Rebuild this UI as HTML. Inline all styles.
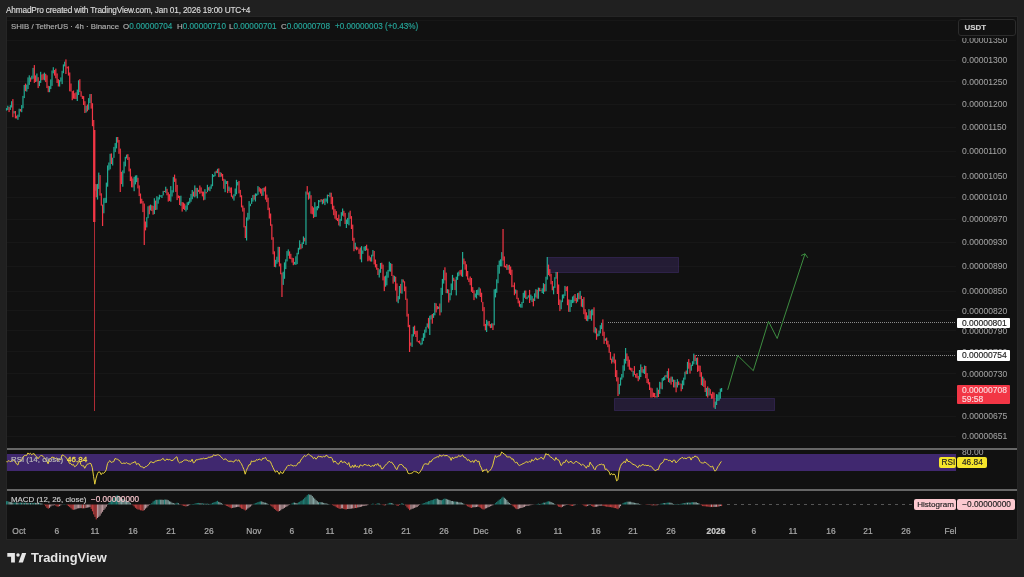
<!DOCTYPE html>
<html><head><meta charset="utf-8"><style>
*{margin:0;padding:0;box-sizing:border-box}
html,body{width:1024px;height:577px;overflow:hidden;background:#202020;font-family:"Liberation Sans",sans-serif}
div{-webkit-text-stroke:0.15px currentColor;will-change:transform}
#top{position:absolute;left:5.8px;top:5.5px;font-size:8.25px;letter-spacing:-0.165px;line-height:10px;color:#dcdcdc;white-space:nowrap}
#panel{position:absolute;left:7px;top:17px;width:1010px;height:522px;background:#111111;overflow:hidden;box-shadow:0 0 0 1px #252525}
svg{position:absolute;left:0;top:0}
.pl{position:absolute;left:961.6px;width:60px;font-size:8.55px;line-height:10px;color:#a2a2a2;white-space:nowrap;-webkit-text-stroke:0.05px currentColor}
#times{position:absolute;left:0;top:0;width:956.3px;height:577px;overflow:hidden}
.tl{position:absolute;top:526.1px;width:40px;text-align:center;font-size:8.4px;letter-spacing:0.15px;line-height:10px;color:#a8a8a8;-webkit-text-stroke:0.22px currentColor}
.tl.b{font-weight:bold;color:#c8c8c8}
.lg{position:absolute;font-size:7.9px;line-height:10px;white-space:nowrap}
.tag{position:absolute;font-size:8.3px;line-height:10px;white-space:nowrap;border-radius:1px}
</style></head><body>
<div id="top">AhmadPro created with TradingView.com, Jan 01, 2026 19:00 UTC+4</div>
<div id="panel"></div>
<svg width="1024" height="577" viewBox="0 0 1024 577">
<line x1="7" y1="20.5" x2="956" y2="20.5" stroke="#171717" stroke-width="1"/><line x1="7" y1="40.5" x2="956" y2="40.5" stroke="#171717" stroke-width="1"/><line x1="7" y1="60.5" x2="956" y2="60.5" stroke="#171717" stroke-width="1"/><line x1="7" y1="81.5" x2="956" y2="81.5" stroke="#171717" stroke-width="1"/><line x1="7" y1="104.5" x2="956" y2="104.5" stroke="#171717" stroke-width="1"/><line x1="7" y1="127.5" x2="956" y2="127.5" stroke="#171717" stroke-width="1"/><line x1="7" y1="151.5" x2="956" y2="151.5" stroke="#171717" stroke-width="1"/><line x1="7" y1="176.5" x2="956" y2="176.5" stroke="#171717" stroke-width="1"/><line x1="7" y1="197.5" x2="956" y2="197.5" stroke="#171717" stroke-width="1"/><line x1="7" y1="219.5" x2="956" y2="219.5" stroke="#171717" stroke-width="1"/><line x1="7" y1="242.5" x2="956" y2="242.5" stroke="#171717" stroke-width="1"/><line x1="7" y1="266.5" x2="956" y2="266.5" stroke="#171717" stroke-width="1"/><line x1="7" y1="291.5" x2="956" y2="291.5" stroke="#171717" stroke-width="1"/><line x1="7" y1="310.5" x2="956" y2="310.5" stroke="#171717" stroke-width="1"/><line x1="7" y1="330.5" x2="956" y2="330.5" stroke="#171717" stroke-width="1"/><line x1="7" y1="351.5" x2="956" y2="351.5" stroke="#171717" stroke-width="1"/><line x1="7" y1="373.5" x2="956" y2="373.5" stroke="#171717" stroke-width="1"/><line x1="7" y1="396.5" x2="956" y2="396.5" stroke="#171717" stroke-width="1"/><line x1="7" y1="416.5" x2="956" y2="416.5" stroke="#171717" stroke-width="1"/><line x1="7" y1="436.5" x2="956" y2="436.5" stroke="#171717" stroke-width="1"/>
<rect x="547.5" y="257.5" width="131" height="15" fill="rgba(105,70,180,0.22)" stroke="rgba(120,80,210,0.45)" stroke-width="1" stroke-dasharray="1 1"/>
<rect x="614.5" y="398.5" width="160" height="12" fill="rgba(105,70,180,0.22)" stroke="rgba(120,80,210,0.45)" stroke-width="1" stroke-dasharray="1 1"/>
<line x1="608" y1="322.5" x2="956" y2="322.5" stroke="#8a8a8a" stroke-width="1" stroke-dasharray="1 1"/>
<line x1="696" y1="355.5" x2="956" y2="355.5" stroke="#8a8a8a" stroke-width="1" stroke-dasharray="1 1"/>
<rect x="94" y="220" width="1" height="191" fill="#f23645" fill-opacity="0.7"/><rect x="5.95" y="108.1" width="1.2" height="2.5" fill="#22ab94"/><rect x="7.22" y="105.7" width="1.2" height="4.3" fill="#22ab94"/><rect x="8.48" y="107.0" width="1.2" height="5.1" fill="#f23645"/><rect x="9.74" y="105.2" width="1.2" height="4.7" fill="#22ab94"/><rect x="11.01" y="101.2" width="1.2" height="6.3" fill="#22ab94"/><rect x="12.27" y="99.1" width="1.2" height="18.1" fill="#f23645"/><rect x="13.53" y="111.1" width="1.2" height="2.3" fill="#22ab94"/><rect x="14.80" y="111.0" width="1.2" height="7.4" fill="#f23645"/><rect x="16.06" y="115.7" width="1.2" height="2.8" fill="#f23645"/><rect x="17.32" y="114.6" width="1.2" height="5.2" fill="#22ab94"/><rect x="18.59" y="108.7" width="1.2" height="8.2" fill="#22ab94"/><rect x="19.85" y="109.0" width="1.2" height="2.5" fill="#f23645"/><rect x="21.11" y="105.1" width="1.2" height="7.1" fill="#22ab94"/><rect x="22.38" y="95.9" width="1.2" height="12.3" fill="#22ab94"/><rect x="23.64" y="85.0" width="1.2" height="13.1" fill="#22ab94"/><rect x="24.90" y="83.6" width="1.2" height="7.6" fill="#f23645"/><rect x="26.17" y="84.7" width="1.2" height="6.9" fill="#22ab94"/><rect x="27.43" y="77.4" width="1.2" height="11.6" fill="#22ab94"/><rect x="28.69" y="75.3" width="1.2" height="9.6" fill="#22ab94"/><rect x="29.96" y="77.5" width="1.2" height="4.3" fill="#f23645"/><rect x="31.22" y="75.7" width="1.2" height="3.8" fill="#22ab94"/><rect x="32.48" y="67.9" width="1.2" height="10.8" fill="#22ab94"/><rect x="33.75" y="65.1" width="1.2" height="17.8" fill="#f23645"/><rect x="35.01" y="75.4" width="1.2" height="6.6" fill="#f23645"/><rect x="36.27" y="73.5" width="1.2" height="8.0" fill="#22ab94"/><rect x="37.54" y="77.2" width="1.2" height="10.9" fill="#f23645"/><rect x="38.80" y="80.9" width="1.2" height="5.2" fill="#22ab94"/><rect x="40.06" y="71.8" width="1.2" height="11.1" fill="#22ab94"/><rect x="41.33" y="74.5" width="1.2" height="5.7" fill="#f23645"/><rect x="42.59" y="73.7" width="1.2" height="6.0" fill="#f23645"/><rect x="43.85" y="72.6" width="1.2" height="7.8" fill="#22ab94"/><rect x="45.12" y="73.8" width="1.2" height="8.3" fill="#f23645"/><rect x="46.38" y="75.3" width="1.2" height="12.8" fill="#f23645"/><rect x="47.64" y="85.8" width="1.2" height="6.4" fill="#f23645"/><rect x="48.91" y="86.1" width="1.2" height="6.1" fill="#22ab94"/><rect x="50.17" y="79.4" width="1.2" height="9.7" fill="#22ab94"/><rect x="51.43" y="70.5" width="1.2" height="15.4" fill="#22ab94"/><rect x="52.70" y="67.2" width="1.2" height="6.1" fill="#22ab94"/><rect x="53.96" y="70.0" width="1.2" height="5.6" fill="#f23645"/><rect x="55.22" y="68.6" width="1.2" height="9.7" fill="#f23645"/><rect x="56.49" y="73.4" width="1.2" height="9.6" fill="#f23645"/><rect x="57.75" y="79.2" width="1.2" height="7.3" fill="#f23645"/><rect x="59.01" y="80.1" width="1.2" height="6.5" fill="#22ab94"/><rect x="60.28" y="77.4" width="1.2" height="4.2" fill="#22ab94"/><rect x="61.54" y="70.8" width="1.2" height="13.3" fill="#22ab94"/><rect x="62.80" y="64.4" width="1.2" height="8.8" fill="#22ab94"/><rect x="64.07" y="61.7" width="1.2" height="4.7" fill="#22ab94"/><rect x="65.33" y="59.4" width="1.2" height="14.6" fill="#f23645"/><rect x="66.59" y="66.7" width="1.2" height="1.7" fill="#f23645"/><rect x="67.86" y="66.3" width="1.2" height="9.3" fill="#f23645"/><rect x="69.12" y="72.5" width="1.2" height="18.8" fill="#f23645"/><rect x="70.38" y="83.5" width="1.2" height="8.0" fill="#f23645"/><rect x="71.65" y="91.1" width="1.2" height="9.1" fill="#f23645"/><rect x="72.91" y="90.5" width="1.2" height="8.2" fill="#f23645"/><rect x="74.17" y="93.2" width="1.2" height="5.7" fill="#f23645"/><rect x="75.44" y="92.3" width="1.2" height="6.8" fill="#f23645"/><rect x="76.70" y="89.6" width="1.2" height="11.4" fill="#22ab94"/><rect x="77.96" y="80.3" width="1.2" height="14.7" fill="#22ab94"/><rect x="79.23" y="79.2" width="1.2" height="12.9" fill="#f23645"/><rect x="80.49" y="91.3" width="1.2" height="5.4" fill="#f23645"/><rect x="81.75" y="95.8" width="1.2" height="3.2" fill="#f23645"/><rect x="83.02" y="96.1" width="1.2" height="8.9" fill="#f23645"/><rect x="84.28" y="101.2" width="1.2" height="11.8" fill="#f23645"/><rect x="85.54" y="105.8" width="1.2" height="6.7" fill="#22ab94"/><rect x="86.81" y="104.5" width="1.2" height="6.8" fill="#f23645"/><rect x="88.07" y="98.1" width="1.2" height="11.7" fill="#22ab94"/><rect x="89.33" y="94.1" width="1.2" height="8.9" fill="#22ab94"/><rect x="90.60" y="94.0" width="1.2" height="14.6" fill="#f23645"/><rect x="91.86" y="103.2" width="1.2" height="23.0" fill="#f23645"/><rect x="93.12" y="120.0" width="1.2" height="102.0" fill="#f23645"/><rect x="94.39" y="184.0" width="1.2" height="6.7" fill="#22ab94"/><rect x="95.65" y="184.2" width="1.2" height="13.1" fill="#f23645"/><rect x="96.91" y="183.9" width="1.2" height="15.7" fill="#22ab94"/><rect x="98.18" y="172.6" width="1.2" height="16.3" fill="#22ab94"/><rect x="99.44" y="175.1" width="1.2" height="20.5" fill="#f23645"/><rect x="100.70" y="193.3" width="1.2" height="12.3" fill="#f23645"/><rect x="101.97" y="204.6" width="1.2" height="21.4" fill="#f23645"/><rect x="103.23" y="198.2" width="1.2" height="15.1" fill="#22ab94"/><rect x="104.49" y="197.8" width="1.2" height="5.3" fill="#22ab94"/><rect x="105.76" y="182.6" width="1.2" height="20.2" fill="#22ab94"/><rect x="107.02" y="165.4" width="1.2" height="21.3" fill="#22ab94"/><rect x="108.28" y="162.5" width="1.2" height="7.9" fill="#22ab94"/><rect x="109.55" y="153.8" width="1.2" height="15.5" fill="#22ab94"/><rect x="110.81" y="153.4" width="1.2" height="10.6" fill="#f23645"/><rect x="112.07" y="157.7" width="1.2" height="7.8" fill="#22ab94"/><rect x="113.34" y="146.9" width="1.2" height="11.0" fill="#22ab94"/><rect x="114.60" y="143.1" width="1.2" height="9.0" fill="#22ab94"/><rect x="115.86" y="137.1" width="1.2" height="11.3" fill="#22ab94"/><rect x="117.13" y="137.0" width="1.2" height="5.6" fill="#f23645"/><rect x="118.39" y="140.0" width="1.2" height="13.8" fill="#f23645"/><rect x="119.65" y="148.6" width="1.2" height="43.4" fill="#f23645"/><rect x="120.92" y="171.8" width="1.2" height="12.3" fill="#f23645"/><rect x="122.18" y="170.4" width="1.2" height="16.3" fill="#22ab94"/><rect x="123.44" y="161.6" width="1.2" height="11.7" fill="#22ab94"/><rect x="124.71" y="156.8" width="1.2" height="9.6" fill="#22ab94"/><rect x="125.97" y="154.6" width="1.2" height="3.8" fill="#22ab94"/><rect x="127.23" y="154.2" width="1.2" height="5.8" fill="#f23645"/><rect x="128.50" y="157.2" width="1.2" height="14.2" fill="#f23645"/><rect x="129.76" y="168.6" width="1.2" height="12.5" fill="#f23645"/><rect x="131.02" y="176.5" width="1.2" height="10.8" fill="#f23645"/><rect x="132.29" y="178.5" width="1.2" height="8.9" fill="#f23645"/><rect x="133.55" y="176.9" width="1.2" height="14.3" fill="#22ab94"/><rect x="134.81" y="175.5" width="1.2" height="8.9" fill="#22ab94"/><rect x="136.08" y="175.2" width="1.2" height="6.9" fill="#22ab94"/><rect x="137.34" y="177.7" width="1.2" height="10.7" fill="#f23645"/><rect x="138.60" y="185.4" width="1.2" height="10.7" fill="#f23645"/><rect x="139.87" y="193.5" width="1.2" height="10.2" fill="#f23645"/><rect x="141.13" y="198.7" width="1.2" height="4.8" fill="#f23645"/><rect x="142.39" y="201.1" width="1.2" height="11.0" fill="#f23645"/><rect x="143.66" y="203.5" width="1.2" height="41.5" fill="#f23645"/><rect x="144.92" y="221.5" width="1.2" height="8.9" fill="#f23645"/><rect x="146.18" y="217.2" width="1.2" height="10.2" fill="#22ab94"/><rect x="147.45" y="206.3" width="1.2" height="11.9" fill="#22ab94"/><rect x="148.71" y="205.5" width="1.2" height="8.8" fill="#f23645"/><rect x="149.97" y="204.6" width="1.2" height="5.8" fill="#22ab94"/><rect x="151.24" y="205.3" width="1.2" height="5.8" fill="#f23645"/><rect x="152.50" y="205.9" width="1.2" height="8.8" fill="#f23645"/><rect x="153.76" y="198.2" width="1.2" height="15.9" fill="#22ab94"/><rect x="155.03" y="200.6" width="1.2" height="9.4" fill="#f23645"/><rect x="156.29" y="196.2" width="1.2" height="13.5" fill="#22ab94"/><rect x="157.55" y="197.2" width="1.2" height="6.5" fill="#22ab94"/><rect x="158.82" y="194.7" width="1.2" height="4.8" fill="#22ab94"/><rect x="160.08" y="195.3" width="1.2" height="1.4" fill="#22ab94"/><rect x="161.34" y="195.0" width="1.2" height="3.0" fill="#22ab94"/><rect x="162.61" y="190.9" width="1.2" height="4.5" fill="#22ab94"/><rect x="163.87" y="190.9" width="1.2" height="1.1" fill="#f23645"/><rect x="165.13" y="186.7" width="1.2" height="6.1" fill="#22ab94"/><rect x="166.40" y="188.8" width="1.2" height="6.5" fill="#f23645"/><rect x="167.66" y="192.3" width="1.2" height="9.3" fill="#f23645"/><rect x="168.92" y="194.2" width="1.2" height="6.7" fill="#f23645"/><rect x="170.19" y="186.1" width="1.2" height="15.6" fill="#22ab94"/><rect x="171.45" y="190.2" width="1.2" height="6.3" fill="#22ab94"/><rect x="172.71" y="177.1" width="1.2" height="15.4" fill="#22ab94"/><rect x="173.98" y="174.6" width="1.2" height="7.3" fill="#f23645"/><rect x="175.24" y="178.5" width="1.2" height="13.4" fill="#f23645"/><rect x="176.50" y="184.9" width="1.2" height="15.2" fill="#f23645"/><rect x="177.77" y="195.4" width="1.2" height="2.7" fill="#f23645"/><rect x="179.03" y="195.9" width="1.2" height="9.1" fill="#f23645"/><rect x="180.29" y="195.7" width="1.2" height="10.1" fill="#22ab94"/><rect x="181.56" y="202.1" width="1.2" height="9.5" fill="#f23645"/><rect x="182.82" y="202.5" width="1.2" height="6.6" fill="#f23645"/><rect x="184.08" y="203.6" width="1.2" height="6.4" fill="#f23645"/><rect x="185.35" y="205.5" width="1.2" height="6.0" fill="#22ab94"/><rect x="186.61" y="202.3" width="1.2" height="7.5" fill="#22ab94"/><rect x="187.87" y="201.6" width="1.2" height="3.5" fill="#22ab94"/><rect x="189.14" y="197.9" width="1.2" height="5.5" fill="#22ab94"/><rect x="190.40" y="193.9" width="1.2" height="7.9" fill="#22ab94"/><rect x="191.66" y="190.0" width="1.2" height="9.2" fill="#22ab94"/><rect x="192.93" y="191.6" width="1.2" height="4.9" fill="#f23645"/><rect x="194.19" y="185.4" width="1.2" height="11.9" fill="#22ab94"/><rect x="195.45" y="187.8" width="1.2" height="8.5" fill="#f23645"/><rect x="196.72" y="187.9" width="1.2" height="10.4" fill="#22ab94"/><rect x="197.98" y="189.8" width="1.2" height="2.1" fill="#f23645"/><rect x="199.24" y="185.5" width="1.2" height="8.3" fill="#f23645"/><rect x="200.51" y="187.4" width="1.2" height="5.8" fill="#f23645"/><rect x="201.77" y="191.5" width="1.2" height="4.9" fill="#f23645"/><rect x="203.03" y="191.6" width="1.2" height="8.7" fill="#f23645"/><rect x="204.30" y="189.2" width="1.2" height="10.5" fill="#22ab94"/><rect x="205.56" y="191.9" width="1.2" height="1.5" fill="#f23645"/><rect x="206.82" y="184.8" width="1.2" height="7.3" fill="#22ab94"/><rect x="208.09" y="187.2" width="1.2" height="3.3" fill="#f23645"/><rect x="209.35" y="186.5" width="1.2" height="4.7" fill="#22ab94"/><rect x="210.61" y="184.4" width="1.2" height="4.4" fill="#22ab94"/><rect x="211.88" y="174.0" width="1.2" height="12.2" fill="#22ab94"/><rect x="213.14" y="175.0" width="1.2" height="2.0" fill="#22ab94"/><rect x="214.40" y="171.6" width="1.2" height="4.6" fill="#22ab94"/><rect x="215.67" y="170.7" width="1.2" height="2.4" fill="#f23645"/><rect x="216.93" y="168.8" width="1.2" height="4.3" fill="#22ab94"/><rect x="218.19" y="168.4" width="1.2" height="8.7" fill="#f23645"/><rect x="219.46" y="172.1" width="1.2" height="5.0" fill="#22ab94"/><rect x="220.72" y="172.8" width="1.2" height="3.8" fill="#f23645"/><rect x="221.98" y="174.0" width="1.2" height="6.8" fill="#f23645"/><rect x="223.25" y="178.8" width="1.2" height="10.0" fill="#f23645"/><rect x="224.51" y="179.5" width="1.2" height="12.7" fill="#22ab94"/><rect x="225.77" y="181.1" width="1.2" height="2.9" fill="#22ab94"/><rect x="227.04" y="180.9" width="1.2" height="12.2" fill="#f23645"/><rect x="228.30" y="186.5" width="1.2" height="4.6" fill="#22ab94"/><rect x="229.56" y="187.6" width="1.2" height="5.3" fill="#f23645"/><rect x="230.83" y="187.4" width="1.2" height="9.4" fill="#f23645"/><rect x="232.09" y="195.6" width="1.2" height="3.0" fill="#f23645"/><rect x="233.35" y="194.2" width="1.2" height="6.4" fill="#22ab94"/><rect x="234.62" y="188.5" width="1.2" height="7.7" fill="#22ab94"/><rect x="235.88" y="179.8" width="1.2" height="14.5" fill="#22ab94"/><rect x="237.14" y="182.0" width="1.2" height="3.4" fill="#22ab94"/><rect x="238.41" y="180.9" width="1.2" height="12.5" fill="#f23645"/><rect x="239.67" y="189.9" width="1.2" height="7.3" fill="#f23645"/><rect x="240.93" y="195.3" width="1.2" height="12.1" fill="#f23645"/><rect x="242.20" y="205.5" width="1.2" height="6.1" fill="#f23645"/><rect x="243.46" y="207.8" width="1.2" height="19.6" fill="#f23645"/><rect x="244.72" y="226.1" width="1.2" height="11.9" fill="#f23645"/><rect x="245.99" y="217.4" width="1.2" height="23.1" fill="#22ab94"/><rect x="247.25" y="212.8" width="1.2" height="7.8" fill="#22ab94"/><rect x="248.51" y="201.1" width="1.2" height="18.3" fill="#22ab94"/><rect x="249.78" y="203.7" width="1.2" height="2.5" fill="#22ab94"/><rect x="251.04" y="198.0" width="1.2" height="5.9" fill="#22ab94"/><rect x="252.30" y="195.1" width="1.2" height="6.5" fill="#22ab94"/><rect x="253.57" y="194.7" width="1.2" height="5.0" fill="#f23645"/><rect x="254.83" y="193.4" width="1.2" height="8.1" fill="#22ab94"/><rect x="256.09" y="193.6" width="1.2" height="2.3" fill="#22ab94"/><rect x="257.36" y="186.1" width="1.2" height="8.7" fill="#22ab94"/><rect x="258.62" y="187.2" width="1.2" height="4.5" fill="#f23645"/><rect x="259.88" y="188.3" width="1.2" height="5.3" fill="#f23645"/><rect x="261.15" y="188.8" width="1.2" height="7.2" fill="#f23645"/><rect x="262.41" y="188.0" width="1.2" height="7.7" fill="#22ab94"/><rect x="263.67" y="187.5" width="1.2" height="4.0" fill="#f23645"/><rect x="264.94" y="186.4" width="1.2" height="13.2" fill="#f23645"/><rect x="266.20" y="194.6" width="1.2" height="7.5" fill="#f23645"/><rect x="267.46" y="197.7" width="1.2" height="12.4" fill="#f23645"/><rect x="268.73" y="207.7" width="1.2" height="10.8" fill="#f23645"/><rect x="269.99" y="213.5" width="1.2" height="12.3" fill="#f23645"/><rect x="271.25" y="224.3" width="1.2" height="15.5" fill="#f23645"/><rect x="272.52" y="237.2" width="1.2" height="17.1" fill="#f23645"/><rect x="273.78" y="251.3" width="1.2" height="15.6" fill="#f23645"/><rect x="275.04" y="259.8" width="1.2" height="7.5" fill="#22ab94"/><rect x="276.31" y="256.7" width="1.2" height="7.1" fill="#22ab94"/><rect x="277.57" y="246.8" width="1.2" height="15.4" fill="#22ab94"/><rect x="278.83" y="246.9" width="1.2" height="19.5" fill="#f23645"/><rect x="280.10" y="263.4" width="1.2" height="10.9" fill="#f23645"/><rect x="281.36" y="272.8" width="1.2" height="24.2" fill="#f23645"/><rect x="282.62" y="271.7" width="1.2" height="13.2" fill="#22ab94"/><rect x="283.89" y="262.4" width="1.2" height="16.4" fill="#22ab94"/><rect x="285.15" y="259.3" width="1.2" height="9.8" fill="#22ab94"/><rect x="286.41" y="251.1" width="1.2" height="10.3" fill="#22ab94"/><rect x="287.68" y="249.4" width="1.2" height="6.4" fill="#22ab94"/><rect x="288.94" y="251.4" width="1.2" height="7.3" fill="#f23645"/><rect x="290.20" y="253.8" width="1.2" height="5.3" fill="#f23645"/><rect x="291.47" y="257.7" width="1.2" height="4.9" fill="#f23645"/><rect x="292.73" y="258.1" width="1.2" height="7.1" fill="#f23645"/><rect x="293.99" y="261.9" width="1.2" height="2.6" fill="#22ab94"/><rect x="295.26" y="256.3" width="1.2" height="8.6" fill="#22ab94"/><rect x="296.52" y="252.8" width="1.2" height="11.3" fill="#22ab94"/><rect x="297.78" y="247.8" width="1.2" height="6.5" fill="#22ab94"/><rect x="299.05" y="240.3" width="1.2" height="9.3" fill="#22ab94"/><rect x="300.31" y="244.0" width="1.2" height="5.2" fill="#f23645"/><rect x="301.57" y="242.4" width="1.2" height="5.8" fill="#22ab94"/><rect x="302.84" y="236.4" width="1.2" height="7.6" fill="#22ab94"/><rect x="304.10" y="237.8" width="1.2" height="3.6" fill="#f23645"/><rect x="305.36" y="191.5" width="1.2" height="53.4" fill="#22ab94"/><rect x="306.63" y="186.1" width="1.2" height="8.5" fill="#f23645"/><rect x="307.89" y="192.5" width="1.2" height="7.2" fill="#f23645"/><rect x="309.15" y="191.3" width="1.2" height="7.3" fill="#22ab94"/><rect x="310.42" y="195.2" width="1.2" height="18.5" fill="#f23645"/><rect x="311.68" y="206.2" width="1.2" height="8.1" fill="#f23645"/><rect x="312.94" y="207.5" width="1.2" height="10.6" fill="#f23645"/><rect x="314.21" y="202.2" width="1.2" height="14.8" fill="#22ab94"/><rect x="315.47" y="206.6" width="1.2" height="10.2" fill="#22ab94"/><rect x="316.73" y="206.0" width="1.2" height="4.3" fill="#22ab94"/><rect x="318.00" y="200.0" width="1.2" height="8.3" fill="#22ab94"/><rect x="319.26" y="200.3" width="1.2" height="1.9" fill="#22ab94"/><rect x="320.52" y="199.1" width="1.2" height="2.6" fill="#f23645"/><rect x="321.79" y="199.6" width="1.2" height="4.7" fill="#22ab94"/><rect x="323.05" y="198.8" width="1.2" height="4.7" fill="#f23645"/><rect x="324.31" y="198.5" width="1.2" height="6.6" fill="#22ab94"/><rect x="325.58" y="198.5" width="1.2" height="3.2" fill="#22ab94"/><rect x="326.84" y="194.6" width="1.2" height="8.8" fill="#22ab94"/><rect x="328.10" y="194.9" width="1.2" height="1.3" fill="#f23645"/><rect x="329.37" y="192.6" width="1.2" height="4.6" fill="#22ab94"/><rect x="330.63" y="192.7" width="1.2" height="11.4" fill="#f23645"/><rect x="331.89" y="196.8" width="1.2" height="12.7" fill="#f23645"/><rect x="333.16" y="205.7" width="1.2" height="9.5" fill="#f23645"/><rect x="334.42" y="209.2" width="1.2" height="9.5" fill="#f23645"/><rect x="335.68" y="211.1" width="1.2" height="9.0" fill="#f23645"/><rect x="336.95" y="218.1" width="1.2" height="3.0" fill="#f23645"/><rect x="338.21" y="214.6" width="1.2" height="10.8" fill="#f23645"/><rect x="339.47" y="218.9" width="1.2" height="7.5" fill="#22ab94"/><rect x="340.74" y="212.2" width="1.2" height="8.7" fill="#22ab94"/><rect x="342.00" y="208.5" width="1.2" height="7.2" fill="#22ab94"/><rect x="343.26" y="210.8" width="1.2" height="5.8" fill="#f23645"/><rect x="344.53" y="212.9" width="1.2" height="11.1" fill="#f23645"/><rect x="345.79" y="219.5" width="1.2" height="8.5" fill="#22ab94"/><rect x="347.05" y="217.9" width="1.2" height="6.2" fill="#22ab94"/><rect x="348.32" y="212.5" width="1.2" height="12.8" fill="#22ab94"/><rect x="349.58" y="210.7" width="1.2" height="8.1" fill="#f23645"/><rect x="350.84" y="216.1" width="1.2" height="12.9" fill="#f23645"/><rect x="352.11" y="224.6" width="1.2" height="16.2" fill="#f23645"/><rect x="353.37" y="237.8" width="1.2" height="13.4" fill="#f23645"/><rect x="354.63" y="242.7" width="1.2" height="6.5" fill="#22ab94"/><rect x="355.90" y="246.6" width="1.2" height="3.7" fill="#f23645"/><rect x="357.16" y="247.4" width="1.2" height="2.1" fill="#f23645"/><rect x="358.42" y="249.3" width="1.2" height="4.6" fill="#f23645"/><rect x="359.69" y="247.5" width="1.2" height="11.9" fill="#f23645"/><rect x="360.95" y="246.1" width="1.2" height="16.2" fill="#22ab94"/><rect x="362.21" y="250.5" width="1.2" height="3.4" fill="#22ab94"/><rect x="363.48" y="246.7" width="1.2" height="3.9" fill="#22ab94"/><rect x="364.74" y="246.0" width="1.2" height="5.0" fill="#22ab94"/><rect x="366.00" y="244.7" width="1.2" height="5.6" fill="#f23645"/><rect x="367.27" y="248.6" width="1.2" height="12.7" fill="#f23645"/><rect x="368.53" y="255.7" width="1.2" height="4.8" fill="#f23645"/><rect x="369.79" y="257.3" width="1.2" height="4.2" fill="#f23645"/><rect x="371.06" y="254.7" width="1.2" height="6.9" fill="#22ab94"/><rect x="372.32" y="250.0" width="1.2" height="6.3" fill="#22ab94"/><rect x="373.58" y="251.0" width="1.2" height="13.4" fill="#f23645"/><rect x="374.85" y="259.5" width="1.2" height="7.9" fill="#f23645"/><rect x="376.11" y="264.1" width="1.2" height="5.6" fill="#f23645"/><rect x="377.37" y="268.0" width="1.2" height="7.0" fill="#f23645"/><rect x="378.64" y="269.3" width="1.2" height="8.2" fill="#22ab94"/><rect x="379.90" y="263.0" width="1.2" height="9.8" fill="#22ab94"/><rect x="381.16" y="262.7" width="1.2" height="6.2" fill="#f23645"/><rect x="382.43" y="264.6" width="1.2" height="15.8" fill="#f23645"/><rect x="383.69" y="276.4" width="1.2" height="14.7" fill="#f23645"/><rect x="384.95" y="275.6" width="1.2" height="11.1" fill="#22ab94"/><rect x="386.22" y="271.6" width="1.2" height="13.7" fill="#22ab94"/><rect x="387.48" y="269.9" width="1.2" height="7.8" fill="#22ab94"/><rect x="388.74" y="261.7" width="1.2" height="9.7" fill="#22ab94"/><rect x="390.01" y="263.1" width="1.2" height="8.6" fill="#22ab94"/><rect x="391.27" y="263.9" width="1.2" height="12.1" fill="#f23645"/><rect x="392.53" y="275.3" width="1.2" height="8.3" fill="#f23645"/><rect x="393.80" y="275.8" width="1.2" height="6.0" fill="#22ab94"/><rect x="395.06" y="276.7" width="1.2" height="13.9" fill="#f23645"/><rect x="396.32" y="283.4" width="1.2" height="18.3" fill="#f23645"/><rect x="397.59" y="296.1" width="1.2" height="7.1" fill="#22ab94"/><rect x="398.85" y="286.0" width="1.2" height="13.3" fill="#22ab94"/><rect x="400.11" y="283.9" width="1.2" height="9.4" fill="#f23645"/><rect x="401.38" y="279.2" width="1.2" height="14.5" fill="#22ab94"/><rect x="402.64" y="279.5" width="1.2" height="2.9" fill="#f23645"/><rect x="403.90" y="281.3" width="1.2" height="9.9" fill="#f23645"/><rect x="405.17" y="286.5" width="1.2" height="13.4" fill="#f23645"/><rect x="406.43" y="298.6" width="1.2" height="18.0" fill="#f23645"/><rect x="407.69" y="313.8" width="1.2" height="13.4" fill="#f23645"/><rect x="408.96" y="324.9" width="1.2" height="27.1" fill="#f23645"/><rect x="410.22" y="342.5" width="1.2" height="3.3" fill="#f23645"/><rect x="411.48" y="334.2" width="1.2" height="12.7" fill="#22ab94"/><rect x="412.75" y="326.7" width="1.2" height="9.8" fill="#22ab94"/><rect x="414.01" y="325.6" width="1.2" height="8.7" fill="#f23645"/><rect x="415.27" y="331.0" width="1.2" height="6.0" fill="#f23645"/><rect x="416.54" y="330.7" width="1.2" height="10.9" fill="#f23645"/><rect x="417.80" y="341.0" width="1.2" height="1.5" fill="#f23645"/><rect x="419.06" y="340.5" width="1.2" height="3.2" fill="#f23645"/><rect x="420.33" y="342.7" width="1.2" height="2.5" fill="#22ab94"/><rect x="421.59" y="337.8" width="1.2" height="6.6" fill="#22ab94"/><rect x="422.85" y="333.2" width="1.2" height="7.7" fill="#22ab94"/><rect x="424.12" y="329.6" width="1.2" height="8.2" fill="#22ab94"/><rect x="425.38" y="326.8" width="1.2" height="5.8" fill="#22ab94"/><rect x="426.64" y="323.4" width="1.2" height="3.9" fill="#22ab94"/><rect x="427.91" y="317.9" width="1.2" height="10.7" fill="#f23645"/><rect x="429.17" y="315.7" width="1.2" height="19.3" fill="#22ab94"/><rect x="430.43" y="315.1" width="1.2" height="4.4" fill="#22ab94"/><rect x="431.70" y="314.0" width="1.2" height="9.7" fill="#f23645"/><rect x="432.96" y="313.1" width="1.2" height="4.8" fill="#22ab94"/><rect x="434.22" y="302.9" width="1.2" height="12.4" fill="#22ab94"/><rect x="435.49" y="303.3" width="1.2" height="9.2" fill="#f23645"/><rect x="436.75" y="306.1" width="1.2" height="3.2" fill="#f23645"/><rect x="438.01" y="306.6" width="1.2" height="2.3" fill="#22ab94"/><rect x="439.28" y="303.5" width="1.2" height="11.9" fill="#f23645"/><rect x="440.54" y="287.8" width="1.2" height="24.6" fill="#22ab94"/><rect x="441.80" y="278.9" width="1.2" height="16.0" fill="#22ab94"/><rect x="443.07" y="270.1" width="1.2" height="13.5" fill="#22ab94"/><rect x="444.33" y="267.3" width="1.2" height="13.0" fill="#f23645"/><rect x="445.59" y="272.6" width="1.2" height="20.5" fill="#f23645"/><rect x="446.86" y="289.1" width="1.2" height="4.2" fill="#22ab94"/><rect x="448.12" y="289.5" width="1.2" height="13.0" fill="#f23645"/><rect x="449.38" y="293.0" width="1.2" height="7.3" fill="#22ab94"/><rect x="450.65" y="283.5" width="1.2" height="11.8" fill="#22ab94"/><rect x="451.91" y="274.9" width="1.2" height="15.2" fill="#22ab94"/><rect x="453.17" y="277.7" width="1.2" height="3.4" fill="#f23645"/><rect x="454.44" y="279.6" width="1.2" height="10.5" fill="#f23645"/><rect x="455.70" y="276.7" width="1.2" height="18.7" fill="#22ab94"/><rect x="456.96" y="272.5" width="1.2" height="7.4" fill="#22ab94"/><rect x="458.23" y="271.5" width="1.2" height="4.7" fill="#22ab94"/><rect x="459.49" y="270.1" width="1.2" height="4.6" fill="#f23645"/><rect x="460.75" y="269.7" width="1.2" height="6.6" fill="#f23645"/><rect x="462.02" y="252.0" width="1.2" height="24.9" fill="#22ab94"/><rect x="463.28" y="258.5" width="1.2" height="5.8" fill="#f23645"/><rect x="464.54" y="261.2" width="1.2" height="8.5" fill="#f23645"/><rect x="465.81" y="264.3" width="1.2" height="12.1" fill="#f23645"/><rect x="467.07" y="271.0" width="1.2" height="8.7" fill="#f23645"/><rect x="468.33" y="278.4" width="1.2" height="3.7" fill="#f23645"/><rect x="469.60" y="276.5" width="1.2" height="8.7" fill="#f23645"/><rect x="470.86" y="278.0" width="1.2" height="13.8" fill="#f23645"/><rect x="472.12" y="287.1" width="1.2" height="5.9" fill="#f23645"/><rect x="473.39" y="290.3" width="1.2" height="9.8" fill="#f23645"/><rect x="474.65" y="293.5" width="1.2" height="3.9" fill="#22ab94"/><rect x="475.91" y="290.0" width="1.2" height="8.5" fill="#22ab94"/><rect x="477.18" y="289.6" width="1.2" height="5.3" fill="#22ab94"/><rect x="478.44" y="287.3" width="1.2" height="8.2" fill="#22ab94"/><rect x="479.70" y="288.5" width="1.2" height="8.5" fill="#f23645"/><rect x="480.97" y="292.7" width="1.2" height="9.5" fill="#f23645"/><rect x="482.23" y="301.9" width="1.2" height="9.3" fill="#f23645"/><rect x="483.49" y="307.1" width="1.2" height="19.1" fill="#f23645"/><rect x="484.76" y="323.9" width="1.2" height="6.4" fill="#f23645"/><rect x="486.02" y="319.8" width="1.2" height="12.2" fill="#22ab94"/><rect x="487.28" y="321.4" width="1.2" height="4.1" fill="#22ab94"/><rect x="488.55" y="321.0" width="1.2" height="5.3" fill="#f23645"/><rect x="489.81" y="324.1" width="1.2" height="4.0" fill="#f23645"/><rect x="491.07" y="323.3" width="1.2" height="4.6" fill="#22ab94"/><rect x="492.34" y="323.4" width="1.2" height="6.6" fill="#f23645"/><rect x="493.60" y="289.4" width="1.2" height="35.9" fill="#22ab94"/><rect x="494.86" y="288.8" width="1.2" height="8.6" fill="#22ab94"/><rect x="496.13" y="279.3" width="1.2" height="13.5" fill="#22ab94"/><rect x="497.39" y="264.9" width="1.2" height="18.3" fill="#22ab94"/><rect x="498.65" y="260.6" width="1.2" height="13.1" fill="#22ab94"/><rect x="499.92" y="259.3" width="1.2" height="7.1" fill="#22ab94"/><rect x="501.18" y="252.1" width="1.2" height="14.3" fill="#22ab94"/><rect x="502.44" y="229.0" width="1.2" height="31.6" fill="#f23645"/><rect x="503.71" y="256.4" width="1.2" height="10.8" fill="#f23645"/><rect x="504.97" y="265.7" width="1.2" height="1.9" fill="#f23645"/><rect x="506.23" y="264.0" width="1.2" height="5.9" fill="#f23645"/><rect x="507.50" y="265.2" width="1.2" height="4.6" fill="#22ab94"/><rect x="508.76" y="264.8" width="1.2" height="8.8" fill="#f23645"/><rect x="510.02" y="266.5" width="1.2" height="8.5" fill="#f23645"/><rect x="511.29" y="269.7" width="1.2" height="17.5" fill="#f23645"/><rect x="512.55" y="285.3" width="1.2" height="1.6" fill="#f23645"/><rect x="513.81" y="282.5" width="1.2" height="12.7" fill="#f23645"/><rect x="515.08" y="289.4" width="1.2" height="4.2" fill="#22ab94"/><rect x="516.34" y="290.2" width="1.2" height="8.9" fill="#f23645"/><rect x="517.60" y="297.8" width="1.2" height="5.5" fill="#f23645"/><rect x="518.87" y="300.6" width="1.2" height="6.1" fill="#f23645"/><rect x="520.13" y="304.0" width="1.2" height="3.6" fill="#22ab94"/><rect x="521.39" y="301.9" width="1.2" height="5.8" fill="#22ab94"/><rect x="522.66" y="292.8" width="1.2" height="10.2" fill="#22ab94"/><rect x="523.92" y="290.6" width="1.2" height="7.2" fill="#22ab94"/><rect x="525.18" y="290.5" width="1.2" height="8.5" fill="#f23645"/><rect x="526.45" y="296.8" width="1.2" height="2.5" fill="#22ab94"/><rect x="527.71" y="295.3" width="1.2" height="2.3" fill="#22ab94"/><rect x="528.97" y="289.9" width="1.2" height="13.1" fill="#f23645"/><rect x="530.24" y="294.6" width="1.2" height="5.7" fill="#22ab94"/><rect x="531.50" y="296.1" width="1.2" height="5.9" fill="#22ab94"/><rect x="532.76" y="298.5" width="1.2" height="7.8" fill="#f23645"/><rect x="534.03" y="293.3" width="1.2" height="7.7" fill="#22ab94"/><rect x="535.29" y="289.2" width="1.2" height="8.2" fill="#22ab94"/><rect x="536.55" y="289.8" width="1.2" height="8.8" fill="#f23645"/><rect x="537.82" y="287.6" width="1.2" height="11.2" fill="#22ab94"/><rect x="539.08" y="287.8" width="1.2" height="3.5" fill="#f23645"/><rect x="540.34" y="289.9" width="1.2" height="0.9" fill="#f23645"/><rect x="541.61" y="288.3" width="1.2" height="4.7" fill="#22ab94"/><rect x="542.87" y="283.1" width="1.2" height="10.9" fill="#22ab94"/><rect x="544.13" y="284.1" width="1.2" height="7.6" fill="#f23645"/><rect x="545.40" y="276.7" width="1.2" height="14.5" fill="#22ab94"/><rect x="546.66" y="257.0" width="1.2" height="22.6" fill="#22ab94"/><rect x="547.92" y="264.6" width="1.2" height="10.5" fill="#f23645"/><rect x="549.19" y="269.1" width="1.2" height="7.3" fill="#f23645"/><rect x="550.45" y="273.8" width="1.2" height="10.5" fill="#f23645"/><rect x="551.71" y="281.0" width="1.2" height="9.3" fill="#f23645"/><rect x="552.98" y="286.4" width="1.2" height="7.9" fill="#22ab94"/><rect x="554.24" y="277.2" width="1.2" height="10.7" fill="#22ab94"/><rect x="555.50" y="272.0" width="1.2" height="6.7" fill="#22ab94"/><rect x="556.77" y="272.0" width="1.2" height="22.0" fill="#f23645"/><rect x="558.03" y="284.5" width="1.2" height="20.5" fill="#f23645"/><rect x="559.29" y="299.5" width="1.2" height="11.6" fill="#f23645"/><rect x="560.56" y="300.5" width="1.2" height="8.8" fill="#22ab94"/><rect x="561.82" y="294.5" width="1.2" height="7.7" fill="#22ab94"/><rect x="563.08" y="294.3" width="1.2" height="4.1" fill="#22ab94"/><rect x="564.35" y="285.9" width="1.2" height="10.0" fill="#22ab94"/><rect x="565.61" y="286.7" width="1.2" height="4.4" fill="#f23645"/><rect x="566.87" y="286.2" width="1.2" height="19.0" fill="#f23645"/><rect x="568.14" y="299.4" width="1.2" height="12.4" fill="#f23645"/><rect x="569.40" y="299.8" width="1.2" height="12.1" fill="#22ab94"/><rect x="570.66" y="299.8" width="1.2" height="7.2" fill="#22ab94"/><rect x="571.93" y="296.5" width="1.2" height="6.6" fill="#22ab94"/><rect x="573.19" y="295.5" width="1.2" height="7.2" fill="#22ab94"/><rect x="574.45" y="294.0" width="1.2" height="7.0" fill="#f23645"/><rect x="575.72" y="297.9" width="1.2" height="5.3" fill="#f23645"/><rect x="576.98" y="293.1" width="1.2" height="8.6" fill="#22ab94"/><rect x="578.24" y="292.6" width="1.2" height="6.7" fill="#f23645"/><rect x="579.51" y="290.9" width="1.2" height="8.2" fill="#22ab94"/><rect x="580.77" y="295.8" width="1.2" height="10.9" fill="#f23645"/><rect x="582.03" y="299.0" width="1.2" height="8.3" fill="#22ab94"/><rect x="583.30" y="297.1" width="1.2" height="17.1" fill="#f23645"/><rect x="584.56" y="309.2" width="1.2" height="9.9" fill="#f23645"/><rect x="585.82" y="312.3" width="1.2" height="8.5" fill="#f23645"/><rect x="587.09" y="315.4" width="1.2" height="5.8" fill="#22ab94"/><rect x="588.35" y="309.1" width="1.2" height="10.0" fill="#22ab94"/><rect x="589.61" y="310.6" width="1.2" height="8.3" fill="#f23645"/><rect x="590.88" y="309.5" width="1.2" height="11.2" fill="#22ab94"/><rect x="592.14" y="309.3" width="1.2" height="6.0" fill="#22ab94"/><rect x="593.40" y="307.3" width="1.2" height="25.2" fill="#f23645"/><rect x="594.67" y="327.2" width="1.2" height="6.2" fill="#22ab94"/><rect x="595.93" y="328.4" width="1.2" height="11.4" fill="#f23645"/><rect x="597.19" y="333.7" width="1.2" height="2.8" fill="#22ab94"/><rect x="598.46" y="330.6" width="1.2" height="5.4" fill="#22ab94"/><rect x="599.72" y="325.2" width="1.2" height="8.2" fill="#22ab94"/><rect x="600.98" y="322.8" width="1.2" height="6.3" fill="#22ab94"/><rect x="602.25" y="319.4" width="1.2" height="16.5" fill="#f23645"/><rect x="603.51" y="331.7" width="1.2" height="12.2" fill="#f23645"/><rect x="604.77" y="338.4" width="1.2" height="2.4" fill="#22ab94"/><rect x="606.04" y="337.6" width="1.2" height="6.9" fill="#f23645"/><rect x="607.30" y="340.7" width="1.2" height="6.5" fill="#f23645"/><rect x="608.56" y="344.4" width="1.2" height="8.4" fill="#f23645"/><rect x="609.83" y="351.9" width="1.2" height="8.0" fill="#f23645"/><rect x="611.09" y="358.6" width="1.2" height="5.0" fill="#f23645"/><rect x="612.35" y="356.5" width="1.2" height="5.7" fill="#22ab94"/><rect x="613.62" y="353.5" width="1.2" height="10.0" fill="#f23645"/><rect x="614.88" y="359.6" width="1.2" height="17.4" fill="#f23645"/><rect x="616.14" y="370.1" width="1.2" height="11.3" fill="#f23645"/><rect x="617.41" y="377.3" width="1.2" height="18.7" fill="#f23645"/><rect x="618.67" y="384.0" width="1.2" height="10.3" fill="#22ab94"/><rect x="619.93" y="377.5" width="1.2" height="8.1" fill="#22ab94"/><rect x="621.20" y="374.0" width="1.2" height="5.6" fill="#22ab94"/><rect x="622.46" y="365.3" width="1.2" height="12.2" fill="#22ab94"/><rect x="623.72" y="358.9" width="1.2" height="11.9" fill="#22ab94"/><rect x="624.99" y="348.0" width="1.2" height="15.6" fill="#22ab94"/><rect x="626.25" y="353.4" width="1.2" height="7.5" fill="#f23645"/><rect x="627.51" y="356.3" width="1.2" height="10.4" fill="#f23645"/><rect x="628.78" y="359.7" width="1.2" height="10.0" fill="#f23645"/><rect x="630.04" y="367.6" width="1.2" height="2.8" fill="#f23645"/><rect x="631.30" y="368.1" width="1.2" height="3.7" fill="#f23645"/><rect x="632.57" y="370.9" width="1.2" height="5.7" fill="#22ab94"/><rect x="633.83" y="366.1" width="1.2" height="8.8" fill="#f23645"/><rect x="635.09" y="374.0" width="1.2" height="3.6" fill="#f23645"/><rect x="636.36" y="373.1" width="1.2" height="5.1" fill="#f23645"/><rect x="637.62" y="376.0" width="1.2" height="5.2" fill="#f23645"/><rect x="638.88" y="370.0" width="1.2" height="9.5" fill="#22ab94"/><rect x="640.15" y="364.4" width="1.2" height="12.6" fill="#22ab94"/><rect x="641.41" y="366.9" width="1.2" height="5.7" fill="#f23645"/><rect x="642.67" y="369.2" width="1.2" height="4.0" fill="#22ab94"/><rect x="643.94" y="365.5" width="1.2" height="8.5" fill="#22ab94"/><rect x="645.20" y="366.0" width="1.2" height="12.2" fill="#f23645"/><rect x="646.46" y="373.1" width="1.2" height="9.9" fill="#f23645"/><rect x="647.73" y="378.8" width="1.2" height="5.6" fill="#f23645"/><rect x="648.99" y="382.2" width="1.2" height="7.8" fill="#f23645"/><rect x="650.25" y="387.6" width="1.2" height="9.9" fill="#f23645"/><rect x="651.52" y="388.3" width="1.2" height="9.2" fill="#f23645"/><rect x="652.78" y="392.6" width="1.2" height="4.4" fill="#f23645"/><rect x="654.04" y="393.0" width="1.2" height="4.5" fill="#f23645"/><rect x="655.31" y="396.0" width="1.2" height="1.5" fill="#f23645"/><rect x="656.57" y="387.7" width="1.2" height="9.8" fill="#22ab94"/><rect x="657.83" y="389.7" width="1.2" height="7.3" fill="#f23645"/><rect x="659.10" y="381.8" width="1.2" height="12.2" fill="#22ab94"/><rect x="660.36" y="382.4" width="1.2" height="6.3" fill="#f23645"/><rect x="661.62" y="378.1" width="1.2" height="11.2" fill="#22ab94"/><rect x="662.89" y="377.1" width="1.2" height="3.6" fill="#22ab94"/><rect x="664.15" y="375.5" width="1.2" height="4.5" fill="#22ab94"/><rect x="665.41" y="374.9" width="1.2" height="2.2" fill="#f23645"/><rect x="666.68" y="371.1" width="1.2" height="7.3" fill="#22ab94"/><rect x="667.94" y="368.4" width="1.2" height="13.7" fill="#f23645"/><rect x="669.20" y="378.3" width="1.2" height="4.5" fill="#22ab94"/><rect x="670.47" y="376.6" width="1.2" height="8.0" fill="#f23645"/><rect x="671.73" y="376.7" width="1.2" height="5.2" fill="#22ab94"/><rect x="672.99" y="379.6" width="1.2" height="7.8" fill="#f23645"/><rect x="674.26" y="379.9" width="1.2" height="7.6" fill="#22ab94"/><rect x="675.52" y="382.1" width="1.2" height="10.2" fill="#f23645"/><rect x="676.78" y="379.2" width="1.2" height="8.3" fill="#22ab94"/><rect x="678.05" y="381.5" width="1.2" height="3.7" fill="#f23645"/><rect x="679.31" y="383.5" width="1.2" height="1.0" fill="#22ab94"/><rect x="680.57" y="383.7" width="1.2" height="7.6" fill="#f23645"/><rect x="681.84" y="380.4" width="1.2" height="8.7" fill="#22ab94"/><rect x="683.10" y="377.6" width="1.2" height="7.7" fill="#22ab94"/><rect x="684.36" y="371.7" width="1.2" height="7.9" fill="#22ab94"/><rect x="685.63" y="370.5" width="1.2" height="3.7" fill="#f23645"/><rect x="686.89" y="361.9" width="1.2" height="12.2" fill="#22ab94"/><rect x="688.15" y="359.1" width="1.2" height="9.6" fill="#f23645"/><rect x="689.42" y="362.7" width="1.2" height="10.9" fill="#f23645"/><rect x="690.68" y="364.7" width="1.2" height="6.0" fill="#22ab94"/><rect x="691.94" y="361.2" width="1.2" height="4.8" fill="#22ab94"/><rect x="693.21" y="353.6" width="1.2" height="10.7" fill="#22ab94"/><rect x="694.47" y="355.0" width="1.2" height="6.1" fill="#f23645"/><rect x="695.73" y="357.9" width="1.2" height="6.8" fill="#22ab94"/><rect x="697.00" y="357.5" width="1.2" height="14.4" fill="#f23645"/><rect x="698.26" y="365.4" width="1.2" height="5.6" fill="#f23645"/><rect x="699.52" y="365.7" width="1.2" height="11.1" fill="#f23645"/><rect x="700.79" y="372.2" width="1.2" height="13.0" fill="#f23645"/><rect x="702.05" y="376.6" width="1.2" height="9.3" fill="#22ab94"/><rect x="703.31" y="378.4" width="1.2" height="8.7" fill="#f23645"/><rect x="704.58" y="380.5" width="1.2" height="11.5" fill="#f23645"/><rect x="705.84" y="387.9" width="1.2" height="8.3" fill="#22ab94"/><rect x="707.10" y="386.4" width="1.2" height="11.2" fill="#f23645"/><rect x="708.37" y="387.9" width="1.2" height="7.7" fill="#22ab94"/><rect x="709.63" y="389.2" width="1.2" height="6.2" fill="#f23645"/><rect x="710.89" y="393.8" width="1.2" height="5.0" fill="#f23645"/><rect x="712.16" y="391.8" width="1.2" height="6.8" fill="#f23645"/><rect x="713.42" y="392.5" width="1.2" height="15.1" fill="#f23645"/><rect x="714.68" y="401.6" width="1.2" height="7.4" fill="#22ab94"/><rect x="715.95" y="394.1" width="1.2" height="10.9" fill="#22ab94"/><rect x="717.21" y="394.5" width="1.2" height="6.5" fill="#22ab94"/><rect x="718.47" y="392.2" width="1.2" height="8.4" fill="#22ab94"/><rect x="719.74" y="388.6" width="1.2" height="10.1" fill="#22ab94"/><rect x="721.00" y="388.0" width="1.2" height="3.8" fill="#22ab94"/><rect x="93.6" y="130" width="1.8" height="92" fill="#f23645"/>
<polyline fill="none" stroke="#3e8e41" stroke-width="1" points="727.7,389.8 737.7,355.5 753.3,370.7 768.5,321.4 777.2,338.5 805,253.8"/>
<polyline fill="none" stroke="#3e8e41" stroke-width="1" points="801.2,255.5 805,253.8 807.8,257.8"/>
<rect x="7" y="454" width="949" height="17" fill="#40286f"/>
<polyline fill="none" stroke="#e6cf3c" stroke-width="1" points="6.4,461.7 7.7,461.7 8.9,460.5 10.2,461.8 11.5,460.8 12.7,459.7 14.0,460.6 15.2,461.6 16.5,463.9 17.8,465.0 19.0,461.7 20.3,460.6 21.6,460.4 22.8,457.2 24.1,455.8 25.3,455.4 26.6,455.6 27.9,452.9 29.1,454.3 30.4,453.2 31.7,454.8 32.9,453.8 34.2,453.7 35.5,455.9 36.7,456.5 38.0,458.8 39.2,457.1 40.5,455.8 41.8,455.5 43.0,456.3 44.3,457.7 45.6,459.4 46.8,461.1 48.1,463.8 49.4,460.0 50.6,458.6 51.9,457.1 53.1,457.3 54.4,457.8 55.7,458.6 56.9,457.9 58.2,460.6 59.5,458.9 60.7,460.1 62.0,455.0 63.3,455.1 64.5,456.3 65.8,457.2 67.0,458.9 68.3,461.2 69.6,463.6 70.8,463.5 72.1,465.2 73.4,464.4 74.6,466.8 75.9,465.9 77.1,464.8 78.4,462.5 79.7,460.9 80.9,464.6 82.2,466.0 83.5,465.7 84.7,468.3 86.0,465.9 87.3,464.1 88.5,463.9 89.8,463.2 91.0,463.7 92.3,467.7 93.6,476.7 94.8,484.2 96.1,478.1 97.4,473.8 98.6,471.9 99.9,472.1 101.2,474.7 102.4,472.9 103.7,473.3 104.9,472.1 106.2,469.8 107.5,463.6 108.7,461.7 110.0,460.6 111.3,462.5 112.5,461.9 113.8,461.6 115.0,458.5 116.3,459.0 117.6,459.3 118.8,460.0 120.1,461.4 121.4,463.4 122.6,463.5 123.9,463.0 125.2,463.5 126.4,462.6 127.7,463.5 128.9,463.8 130.2,464.4 131.5,463.3 132.7,462.8 134.0,462.3 135.3,461.5 136.5,464.6 137.8,463.6 139.1,464.0 140.3,466.4 141.6,466.8 142.8,467.1 144.1,468.2 145.4,466.6 146.6,466.4 147.9,465.2 149.2,464.1 150.4,461.9 151.7,461.9 152.9,462.7 154.2,462.6 155.5,460.9 156.7,461.0 158.0,460.4 159.3,460.3 160.5,460.2 161.8,459.4 163.1,458.3 164.3,460.3 165.6,460.4 166.8,458.9 168.1,459.9 169.4,459.4 170.6,460.0 171.9,460.7 173.2,460.0 174.4,459.1 175.7,457.4 176.9,456.8 178.2,461.5 179.5,462.8 180.7,462.2 182.0,462.0 183.3,460.7 184.5,460.0 185.8,460.0 187.1,460.1 188.3,461.1 189.6,461.0 190.8,461.6 192.1,459.2 193.4,462.9 194.6,462.4 195.9,459.8 197.2,459.9 198.4,459.4 199.7,459.2 201.0,458.8 202.2,458.9 203.5,458.2 204.7,458.8 206.0,458.4 207.3,458.4 208.5,457.0 209.8,457.3 211.1,456.8 212.3,456.8 213.6,454.7 214.8,455.5 216.1,455.3 217.4,454.8 218.6,454.9 219.9,455.7 221.2,456.9 222.4,458.4 223.7,459.7 225.0,458.8 226.2,459.2 227.5,460.8 228.7,461.4 230.0,461.2 231.3,461.2 232.5,461.6 233.8,462.1 235.1,460.2 236.3,459.9 237.6,460.9 238.9,459.8 240.1,462.2 241.4,463.7 242.6,466.5 243.9,469.5 245.2,474.2 246.4,470.4 247.7,467.5 249.0,464.7 250.2,464.8 251.5,460.9 252.7,461.6 254.0,461.1 255.3,461.3 256.5,459.5 257.8,460.2 259.1,458.9 260.3,459.7 261.6,460.3 262.9,458.1 264.1,458.6 265.4,457.2 266.6,459.7 267.9,460.8 269.2,460.9 270.4,461.6 271.7,464.7 273.0,467.6 274.2,470.0 275.5,472.3 276.8,470.7 278.0,472.1 279.3,474.3 280.5,471.5 281.8,473.3 283.1,473.2 284.3,470.5 285.6,469.1 286.9,466.7 288.1,465.3 289.4,465.6 290.6,464.9 291.9,465.2 293.2,466.1 294.4,465.6 295.7,466.0 297.0,464.7 298.2,462.7 299.5,462.9 300.8,460.1 302.0,458.6 303.3,457.0 304.5,455.4 305.8,456.5 307.1,455.2 308.3,453.9 309.6,454.9 310.9,456.0 312.1,456.4 313.4,458.6 314.7,457.4 315.9,459.2 317.2,458.0 318.4,456.0 319.7,456.7 321.0,456.6 322.2,457.2 323.5,456.3 324.8,457.0 326.0,455.2 327.3,455.7 328.5,457.4 329.8,457.6 331.1,457.2 332.3,458.8 333.6,462.4 334.9,460.9 336.1,462.3 337.4,463.9 338.7,464.2 339.9,462.2 341.2,460.6 342.4,462.7 343.7,462.1 345.0,461.8 346.2,463.3 347.5,464.7 348.8,462.6 350.0,466.9 351.3,467.5 352.6,465.2 353.8,467.5 355.1,464.8 356.3,467.1 357.6,466.2 358.9,467.7 360.1,464.9 361.4,465.3 362.7,466.1 363.9,464.5 365.2,464.6 366.4,465.1 367.7,465.5 369.0,464.8 370.2,466.4 371.5,466.2 372.8,465.4 374.0,466.4 375.3,464.2 376.6,465.2 377.8,463.5 379.1,466.2 380.3,465.4 381.6,468.9 382.9,468.7 384.1,466.8 385.4,465.2 386.7,463.8 387.9,462.8 389.2,461.2 390.5,462.4 391.7,462.1 393.0,464.0 394.2,465.4 395.5,468.1 396.8,469.7 398.0,466.9 399.3,464.7 400.6,464.5 401.8,464.5 403.1,466.0 404.3,467.7 405.6,467.9 406.9,470.1 408.1,473.3 409.4,473.7 410.7,473.4 411.9,473.1 413.2,472.3 414.5,470.9 415.7,472.1 417.0,471.8 418.2,473.4 419.5,472.8 420.8,470.7 422.0,469.1 423.3,465.6 424.6,463.8 425.8,463.8 427.1,464.1 428.4,464.4 429.6,461.3 430.9,462.0 432.1,460.0 433.4,458.8 434.7,458.0 435.9,457.6 437.2,456.6 438.5,457.2 439.7,454.9 441.0,456.2 442.2,455.9 443.5,455.0 444.8,455.9 446.0,455.5 447.3,455.6 448.6,456.8 449.8,457.1 451.1,460.4 452.4,457.1 453.6,458.8 454.9,457.3 456.1,457.2 457.4,457.3 458.7,455.4 459.9,456.4 461.2,456.1 462.5,454.8 463.7,457.0 465.0,457.4 466.3,458.4 467.5,460.4 468.8,459.6 470.0,461.5 471.3,462.1 472.6,460.6 473.8,462.5 475.1,460.1 476.4,460.2 477.6,461.9 478.9,461.0 480.1,465.6 481.4,467.9 482.7,471.8 483.9,469.9 485.2,470.3 486.5,469.1 487.7,472.6 489.0,471.4 490.3,470.1 491.5,468.4 492.8,465.1 494.0,460.1 495.3,455.6 496.6,457.5 497.8,456.2 499.1,455.9 500.4,455.4 501.6,452.0 502.9,453.0 504.2,454.1 505.4,454.6 506.7,456.8 507.9,457.0 509.2,456.9 510.5,457.2 511.7,459.3 513.0,458.8 514.3,461.4 515.5,462.8 516.8,462.1 518.0,464.4 519.3,465.5 520.6,464.9 521.8,464.4 523.1,463.5 524.4,463.3 525.6,461.9 526.9,461.8 528.2,462.5 529.4,461.2 530.7,462.2 531.9,459.4 533.2,461.0 534.5,459.8 535.7,457.8 537.0,460.0 538.3,459.1 539.5,458.7 540.8,457.5 542.1,457.8 543.3,459.4 544.6,457.0 545.8,453.5 547.1,454.7 548.4,454.2 549.6,456.3 550.9,457.2 552.2,457.9 553.4,459.2 554.7,460.5 555.9,457.5 557.2,459.7 558.5,459.8 559.7,461.9 561.0,465.6 562.3,464.4 563.5,462.0 564.8,462.6 566.1,459.8 567.3,460.9 568.6,462.9 569.8,461.9 571.1,461.2 572.4,463.0 573.6,463.4 574.9,462.6 576.2,461.0 577.4,462.3 578.7,463.0 580.0,463.6 581.2,465.4 582.5,464.3 583.7,465.0 585.0,466.2 586.3,468.2 587.5,465.7 588.8,466.8 590.1,462.1 591.3,464.6 592.6,465.4 593.8,468.5 595.1,469.8 596.4,466.5 597.6,465.9 598.9,464.6 600.2,464.7 601.4,464.1 602.7,464.8 604.0,464.7 605.2,469.5 606.5,468.9 607.7,470.7 609.0,471.5 610.3,475.1 611.5,473.4 612.8,474.8 614.1,473.9 615.3,475.4 616.6,480.9 617.9,479.9 619.1,470.4 620.4,466.4 621.6,463.8 622.9,463.1 624.2,461.3 625.4,462.9 626.7,458.8 628.0,461.5 629.2,461.5 630.5,462.1 631.7,463.5 633.0,464.3 634.3,464.8 635.5,465.2 636.8,466.9 638.1,467.6 639.3,465.2 640.6,466.2 641.9,464.8 643.1,464.6 644.4,465.4 645.6,465.2 646.9,465.7 648.2,465.2 649.4,466.2 650.7,466.0 652.0,467.6 653.2,468.5 654.5,470.3 655.8,470.6 657.0,469.5 658.3,469.6 659.5,465.8 660.8,463.5 662.1,463.1 663.3,461.7 664.6,458.9 665.9,459.5 667.1,459.3 668.4,460.7 669.6,460.3 670.9,460.8 672.2,462.3 673.4,460.1 674.7,460.2 676.0,462.9 677.2,461.6 678.5,460.5 679.8,458.7 681.0,458.5 682.3,457.1 683.5,458.7 684.8,458.0 686.1,458.8 687.3,457.8 688.6,457.3 689.9,457.2 691.1,460.1 692.4,457.3 693.7,457.5 694.9,455.9 696.2,456.8 697.4,456.9 698.7,459.2 700.0,461.6 701.2,462.8 702.5,463.0 703.8,462.9 705.0,461.8 706.3,463.2 707.5,463.9 708.8,465.2 710.1,466.6 711.3,466.9 712.6,466.1 713.9,469.3 715.1,471.2 716.4,469.9 717.7,466.8 718.9,465.3 720.2,463.1 721.4,461.4"/>
<rect x="6.00" y="501.2" width="1.1" height="3.3" fill="#26a69a" fill-opacity="0.72"/><rect x="7.26" y="501.1" width="1.1" height="3.4" fill="#26a69a" fill-opacity="0.72"/><rect x="8.53" y="501.8" width="1.1" height="2.7" fill="#b2dfdb" fill-opacity="0.72"/><rect x="9.79" y="502.1" width="1.1" height="2.4" fill="#b2dfdb" fill-opacity="0.72"/><rect x="11.05" y="502.2" width="1.1" height="2.3" fill="#b2dfdb" fill-opacity="0.72"/><rect x="12.32" y="502.7" width="1.1" height="1.8" fill="#b2dfdb" fill-opacity="0.72"/><rect x="13.58" y="502.6" width="1.1" height="1.9" fill="#26a69a" fill-opacity="0.72"/><rect x="14.84" y="502.4" width="1.1" height="2.1" fill="#26a69a" fill-opacity="0.72"/><rect x="16.11" y="502.4" width="1.1" height="2.1" fill="#b2dfdb" fill-opacity="0.72"/><rect x="17.37" y="502.8" width="1.1" height="1.7" fill="#b2dfdb" fill-opacity="0.72"/><rect x="18.63" y="502.7" width="1.1" height="1.8" fill="#26a69a" fill-opacity="0.72"/><rect x="19.90" y="502.5" width="1.1" height="2.0" fill="#26a69a" fill-opacity="0.72"/><rect x="21.16" y="502.7" width="1.1" height="1.8" fill="#b2dfdb" fill-opacity="0.72"/><rect x="22.42" y="502.5" width="1.1" height="2.0" fill="#26a69a" fill-opacity="0.72"/><rect x="23.69" y="502.9" width="1.1" height="1.6" fill="#b2dfdb" fill-opacity="0.72"/><rect x="24.95" y="502.5" width="1.1" height="2.0" fill="#26a69a" fill-opacity="0.72"/><rect x="26.21" y="502.8" width="1.1" height="1.7" fill="#b2dfdb" fill-opacity="0.72"/><rect x="27.48" y="502.9" width="1.1" height="1.6" fill="#b2dfdb" fill-opacity="0.72"/><rect x="28.74" y="502.8" width="1.1" height="1.7" fill="#26a69a" fill-opacity="0.72"/><rect x="30.00" y="503.0" width="1.1" height="1.5" fill="#b2dfdb" fill-opacity="0.72"/><rect x="31.27" y="502.7" width="1.1" height="1.8" fill="#26a69a" fill-opacity="0.72"/><rect x="32.53" y="503.0" width="1.1" height="1.5" fill="#b2dfdb" fill-opacity="0.72"/><rect x="33.79" y="502.7" width="1.1" height="1.8" fill="#26a69a" fill-opacity="0.72"/><rect x="35.06" y="502.9" width="1.1" height="1.6" fill="#b2dfdb" fill-opacity="0.72"/><rect x="36.32" y="503.0" width="1.1" height="1.5" fill="#b2dfdb" fill-opacity="0.72"/><rect x="37.58" y="503.1" width="1.1" height="1.4" fill="#b2dfdb" fill-opacity="0.72"/><rect x="38.85" y="502.9" width="1.1" height="1.6" fill="#26a69a" fill-opacity="0.72"/><rect x="40.11" y="503.4" width="1.1" height="1.1" fill="#b2dfdb" fill-opacity="0.72"/><rect x="41.37" y="503.5" width="1.1" height="1.0" fill="#b2dfdb" fill-opacity="0.72"/><rect x="42.64" y="504.4" width="1.1" height="0.1" fill="#b2dfdb" fill-opacity="0.72"/><rect x="43.90" y="504.5" width="1.1" height="0.4" fill="#ff5252" fill-opacity="0.72"/><rect x="45.16" y="504.5" width="1.1" height="1.8" fill="#ff5252" fill-opacity="0.72"/><rect x="46.43" y="504.5" width="1.1" height="3.4" fill="#ff5252" fill-opacity="0.72"/><rect x="47.69" y="504.5" width="1.1" height="4.2" fill="#ff5252" fill-opacity="0.72"/><rect x="48.95" y="504.5" width="1.1" height="3.3" fill="#ffcdd2" fill-opacity="0.72"/><rect x="50.22" y="504.5" width="1.1" height="2.0" fill="#ffcdd2" fill-opacity="0.72"/><rect x="51.48" y="504.5" width="1.1" height="1.0" fill="#ffcdd2" fill-opacity="0.72"/><rect x="52.74" y="504.5" width="1.1" height="0.9" fill="#ffcdd2" fill-opacity="0.72"/><rect x="54.01" y="504.5" width="1.1" height="0.6" fill="#ffcdd2" fill-opacity="0.72"/><rect x="55.27" y="504.5" width="1.1" height="1.2" fill="#ff5252" fill-opacity="0.72"/><rect x="56.53" y="504.5" width="1.1" height="2.0" fill="#ff5252" fill-opacity="0.72"/><rect x="57.80" y="504.5" width="1.1" height="2.1" fill="#ff5252" fill-opacity="0.72"/><rect x="59.06" y="504.5" width="1.1" height="1.6" fill="#ffcdd2" fill-opacity="0.72"/><rect x="60.32" y="504.5" width="1.1" height="0.7" fill="#ffcdd2" fill-opacity="0.72"/><rect x="61.59" y="504.5" width="1.1" height="0.2" fill="#ffcdd2" fill-opacity="0.72"/><rect x="62.85" y="504.2" width="1.1" height="0.3" fill="#26a69a" fill-opacity="0.72"/><rect x="64.11" y="504.1" width="1.1" height="0.4" fill="#26a69a" fill-opacity="0.72"/><rect x="65.38" y="504.4" width="1.1" height="0.1" fill="#b2dfdb" fill-opacity="0.72"/><rect x="66.64" y="504.5" width="1.1" height="0.7" fill="#ff5252" fill-opacity="0.72"/><rect x="67.90" y="504.5" width="1.1" height="1.6" fill="#ff5252" fill-opacity="0.72"/><rect x="69.17" y="504.5" width="1.1" height="2.6" fill="#ff5252" fill-opacity="0.72"/><rect x="70.43" y="504.5" width="1.1" height="3.8" fill="#ff5252" fill-opacity="0.72"/><rect x="71.69" y="504.5" width="1.1" height="5.0" fill="#ff5252" fill-opacity="0.72"/><rect x="72.96" y="504.5" width="1.1" height="5.3" fill="#ff5252" fill-opacity="0.72"/><rect x="74.22" y="504.5" width="1.1" height="5.1" fill="#ffcdd2" fill-opacity="0.72"/><rect x="75.48" y="504.5" width="1.1" height="4.7" fill="#ffcdd2" fill-opacity="0.72"/><rect x="76.75" y="504.5" width="1.1" height="4.0" fill="#ffcdd2" fill-opacity="0.72"/><rect x="78.01" y="504.5" width="1.1" height="3.8" fill="#ffcdd2" fill-opacity="0.72"/><rect x="79.27" y="504.5" width="1.1" height="3.7" fill="#ffcdd2" fill-opacity="0.72"/><rect x="80.54" y="504.5" width="1.1" height="3.6" fill="#ffcdd2" fill-opacity="0.72"/><rect x="81.80" y="504.5" width="1.1" height="3.9" fill="#ff5252" fill-opacity="0.72"/><rect x="83.06" y="504.5" width="1.1" height="3.8" fill="#ffcdd2" fill-opacity="0.72"/><rect x="84.33" y="504.5" width="1.1" height="3.8" fill="#ff5252" fill-opacity="0.72"/><rect x="85.59" y="504.5" width="1.1" height="3.4" fill="#ffcdd2" fill-opacity="0.72"/><rect x="86.85" y="504.5" width="1.1" height="3.1" fill="#ffcdd2" fill-opacity="0.72"/><rect x="88.12" y="504.5" width="1.1" height="2.9" fill="#ffcdd2" fill-opacity="0.72"/><rect x="89.38" y="504.5" width="1.1" height="2.6" fill="#ffcdd2" fill-opacity="0.72"/><rect x="90.64" y="504.5" width="1.1" height="4.4" fill="#ff5252" fill-opacity="0.72"/><rect x="91.91" y="504.5" width="1.1" height="6.8" fill="#ff5252" fill-opacity="0.72"/><rect x="93.17" y="504.5" width="1.1" height="9.9" fill="#ff5252" fill-opacity="0.72"/><rect x="94.43" y="504.5" width="1.1" height="12.4" fill="#ff5252" fill-opacity="0.72"/><rect x="95.70" y="504.5" width="1.1" height="14.9" fill="#ff5252" fill-opacity="0.72"/><rect x="96.96" y="504.5" width="1.1" height="13.5" fill="#ffcdd2" fill-opacity="0.72"/><rect x="98.22" y="504.5" width="1.1" height="12.4" fill="#ffcdd2" fill-opacity="0.72"/><rect x="99.49" y="504.5" width="1.1" height="11.2" fill="#ffcdd2" fill-opacity="0.72"/><rect x="100.75" y="504.5" width="1.1" height="9.0" fill="#ffcdd2" fill-opacity="0.72"/><rect x="102.01" y="504.5" width="1.1" height="7.3" fill="#ffcdd2" fill-opacity="0.72"/><rect x="103.28" y="504.5" width="1.1" height="5.5" fill="#ffcdd2" fill-opacity="0.72"/><rect x="104.54" y="504.5" width="1.1" height="4.0" fill="#ffcdd2" fill-opacity="0.72"/><rect x="105.80" y="504.5" width="1.1" height="2.2" fill="#ffcdd2" fill-opacity="0.72"/><rect x="107.07" y="504.5" width="1.1" height="0.4" fill="#ffcdd2" fill-opacity="0.72"/><rect x="108.33" y="503.2" width="1.1" height="1.3" fill="#26a69a" fill-opacity="0.72"/><rect x="109.59" y="501.5" width="1.1" height="3.0" fill="#26a69a" fill-opacity="0.72"/><rect x="110.86" y="500.3" width="1.1" height="4.2" fill="#26a69a" fill-opacity="0.72"/><rect x="112.12" y="499.3" width="1.1" height="5.2" fill="#26a69a" fill-opacity="0.72"/><rect x="113.38" y="498.0" width="1.1" height="6.5" fill="#26a69a" fill-opacity="0.72"/><rect x="114.65" y="496.7" width="1.1" height="7.8" fill="#26a69a" fill-opacity="0.72"/><rect x="115.91" y="495.7" width="1.1" height="8.8" fill="#26a69a" fill-opacity="0.72"/><rect x="117.17" y="495.3" width="1.1" height="9.2" fill="#26a69a" fill-opacity="0.72"/><rect x="118.44" y="496.3" width="1.1" height="8.2" fill="#b2dfdb" fill-opacity="0.72"/><rect x="119.70" y="497.1" width="1.1" height="7.4" fill="#b2dfdb" fill-opacity="0.72"/><rect x="120.96" y="498.2" width="1.1" height="6.3" fill="#b2dfdb" fill-opacity="0.72"/><rect x="122.23" y="498.9" width="1.1" height="5.6" fill="#b2dfdb" fill-opacity="0.72"/><rect x="123.49" y="499.4" width="1.1" height="5.1" fill="#b2dfdb" fill-opacity="0.72"/><rect x="124.75" y="500.2" width="1.1" height="4.3" fill="#b2dfdb" fill-opacity="0.72"/><rect x="126.02" y="501.0" width="1.1" height="3.5" fill="#b2dfdb" fill-opacity="0.72"/><rect x="127.28" y="501.2" width="1.1" height="3.3" fill="#b2dfdb" fill-opacity="0.72"/><rect x="128.54" y="501.9" width="1.1" height="2.6" fill="#b2dfdb" fill-opacity="0.72"/><rect x="129.81" y="502.9" width="1.1" height="1.6" fill="#b2dfdb" fill-opacity="0.72"/><rect x="131.07" y="504.3" width="1.1" height="0.2" fill="#b2dfdb" fill-opacity="0.72"/><rect x="132.33" y="504.5" width="1.1" height="0.7" fill="#ff5252" fill-opacity="0.72"/><rect x="133.60" y="504.5" width="1.1" height="1.9" fill="#ff5252" fill-opacity="0.72"/><rect x="134.86" y="504.5" width="1.1" height="3.3" fill="#ff5252" fill-opacity="0.72"/><rect x="136.12" y="504.5" width="1.1" height="4.3" fill="#ff5252" fill-opacity="0.72"/><rect x="137.39" y="504.5" width="1.1" height="5.0" fill="#ff5252" fill-opacity="0.72"/><rect x="138.65" y="504.5" width="1.1" height="5.1" fill="#ff5252" fill-opacity="0.72"/><rect x="139.91" y="504.5" width="1.1" height="5.8" fill="#ff5252" fill-opacity="0.72"/><rect x="141.18" y="504.5" width="1.1" height="5.9" fill="#ff5252" fill-opacity="0.72"/><rect x="142.44" y="504.5" width="1.1" height="6.4" fill="#ff5252" fill-opacity="0.72"/><rect x="143.70" y="504.5" width="1.1" height="5.6" fill="#ffcdd2" fill-opacity="0.72"/><rect x="144.97" y="504.5" width="1.1" height="4.1" fill="#ffcdd2" fill-opacity="0.72"/><rect x="146.23" y="504.5" width="1.1" height="3.1" fill="#ffcdd2" fill-opacity="0.72"/><rect x="147.49" y="504.5" width="1.1" height="1.7" fill="#ffcdd2" fill-opacity="0.72"/><rect x="148.76" y="504.5" width="1.1" height="0.5" fill="#ffcdd2" fill-opacity="0.72"/><rect x="150.02" y="504.1" width="1.1" height="0.4" fill="#26a69a" fill-opacity="0.72"/><rect x="151.28" y="503.1" width="1.1" height="1.4" fill="#26a69a" fill-opacity="0.72"/><rect x="152.55" y="501.5" width="1.1" height="3.0" fill="#26a69a" fill-opacity="0.72"/><rect x="153.81" y="500.7" width="1.1" height="3.8" fill="#26a69a" fill-opacity="0.72"/><rect x="155.07" y="499.8" width="1.1" height="4.7" fill="#26a69a" fill-opacity="0.72"/><rect x="156.34" y="499.8" width="1.1" height="4.7" fill="#b2dfdb" fill-opacity="0.72"/><rect x="157.60" y="499.7" width="1.1" height="4.8" fill="#26a69a" fill-opacity="0.72"/><rect x="158.86" y="499.6" width="1.1" height="4.9" fill="#26a69a" fill-opacity="0.72"/><rect x="160.13" y="499.7" width="1.1" height="4.8" fill="#b2dfdb" fill-opacity="0.72"/><rect x="161.39" y="499.7" width="1.1" height="4.8" fill="#b2dfdb" fill-opacity="0.72"/><rect x="162.65" y="499.9" width="1.1" height="4.6" fill="#b2dfdb" fill-opacity="0.72"/><rect x="163.92" y="499.5" width="1.1" height="5.0" fill="#26a69a" fill-opacity="0.72"/><rect x="165.18" y="499.6" width="1.1" height="4.9" fill="#b2dfdb" fill-opacity="0.72"/><rect x="166.44" y="499.7" width="1.1" height="4.8" fill="#b2dfdb" fill-opacity="0.72"/><rect x="167.71" y="500.2" width="1.1" height="4.3" fill="#b2dfdb" fill-opacity="0.72"/><rect x="168.97" y="501.3" width="1.1" height="3.2" fill="#b2dfdb" fill-opacity="0.72"/><rect x="170.23" y="501.7" width="1.1" height="2.8" fill="#b2dfdb" fill-opacity="0.72"/><rect x="171.50" y="502.7" width="1.1" height="1.8" fill="#b2dfdb" fill-opacity="0.72"/><rect x="172.76" y="503.0" width="1.1" height="1.5" fill="#b2dfdb" fill-opacity="0.72"/><rect x="174.02" y="503.6" width="1.1" height="0.9" fill="#b2dfdb" fill-opacity="0.72"/><rect x="175.29" y="503.4" width="1.1" height="1.1" fill="#26a69a" fill-opacity="0.72"/><rect x="176.55" y="502.7" width="1.1" height="1.8" fill="#26a69a" fill-opacity="0.72"/><rect x="177.81" y="503.2" width="1.1" height="1.3" fill="#b2dfdb" fill-opacity="0.72"/><rect x="179.08" y="504.2" width="1.1" height="0.3" fill="#b2dfdb" fill-opacity="0.72"/><rect x="180.34" y="504.5" width="1.1" height="0.3" fill="#ff5252" fill-opacity="0.72"/><rect x="181.60" y="504.5" width="1.1" height="0.8" fill="#ff5252" fill-opacity="0.72"/><rect x="182.87" y="504.5" width="1.1" height="1.3" fill="#ff5252" fill-opacity="0.72"/><rect x="184.13" y="504.5" width="1.1" height="1.6" fill="#ff5252" fill-opacity="0.72"/><rect x="185.39" y="504.5" width="1.1" height="2.0" fill="#ff5252" fill-opacity="0.72"/><rect x="186.66" y="504.5" width="1.1" height="1.6" fill="#ffcdd2" fill-opacity="0.72"/><rect x="187.92" y="504.5" width="1.1" height="1.0" fill="#ffcdd2" fill-opacity="0.72"/><rect x="189.18" y="504.5" width="1.1" height="0.6" fill="#ffcdd2" fill-opacity="0.72"/><rect x="190.45" y="504.3" width="1.1" height="0.2" fill="#26a69a" fill-opacity="0.72"/><rect x="191.71" y="504.0" width="1.1" height="0.5" fill="#26a69a" fill-opacity="0.72"/><rect x="192.97" y="504.0" width="1.1" height="0.5" fill="#26a69a" fill-opacity="0.72"/><rect x="194.24" y="503.7" width="1.1" height="0.8" fill="#26a69a" fill-opacity="0.72"/><rect x="195.50" y="503.2" width="1.1" height="1.3" fill="#26a69a" fill-opacity="0.72"/><rect x="196.76" y="503.0" width="1.1" height="1.5" fill="#26a69a" fill-opacity="0.72"/><rect x="198.03" y="502.9" width="1.1" height="1.6" fill="#26a69a" fill-opacity="0.72"/><rect x="199.29" y="503.3" width="1.1" height="1.2" fill="#b2dfdb" fill-opacity="0.72"/><rect x="200.55" y="503.4" width="1.1" height="1.1" fill="#b2dfdb" fill-opacity="0.72"/><rect x="201.82" y="503.2" width="1.1" height="1.3" fill="#26a69a" fill-opacity="0.72"/><rect x="203.08" y="503.7" width="1.1" height="0.8" fill="#b2dfdb" fill-opacity="0.72"/><rect x="204.34" y="503.6" width="1.1" height="0.9" fill="#26a69a" fill-opacity="0.72"/><rect x="205.61" y="503.8" width="1.1" height="0.7" fill="#b2dfdb" fill-opacity="0.72"/><rect x="206.87" y="503.6" width="1.1" height="0.9" fill="#26a69a" fill-opacity="0.72"/><rect x="208.13" y="503.9" width="1.1" height="0.6" fill="#b2dfdb" fill-opacity="0.72"/><rect x="209.40" y="503.9" width="1.1" height="0.6" fill="#26a69a" fill-opacity="0.72"/><rect x="210.66" y="503.7" width="1.1" height="0.8" fill="#26a69a" fill-opacity="0.72"/><rect x="211.92" y="502.9" width="1.1" height="1.6" fill="#26a69a" fill-opacity="0.72"/><rect x="213.19" y="502.5" width="1.1" height="2.0" fill="#26a69a" fill-opacity="0.72"/><rect x="214.45" y="502.0" width="1.1" height="2.5" fill="#26a69a" fill-opacity="0.72"/><rect x="215.71" y="501.4" width="1.1" height="3.1" fill="#26a69a" fill-opacity="0.72"/><rect x="216.98" y="500.8" width="1.1" height="3.7" fill="#26a69a" fill-opacity="0.72"/><rect x="218.24" y="501.9" width="1.1" height="2.6" fill="#b2dfdb" fill-opacity="0.72"/><rect x="219.50" y="502.5" width="1.1" height="2.0" fill="#b2dfdb" fill-opacity="0.72"/><rect x="220.77" y="503.1" width="1.1" height="1.4" fill="#b2dfdb" fill-opacity="0.72"/><rect x="222.03" y="503.9" width="1.1" height="0.6" fill="#b2dfdb" fill-opacity="0.72"/><rect x="223.29" y="504.5" width="1.1" height="0.1" fill="#ff5252" fill-opacity="0.72"/><rect x="224.56" y="504.5" width="1.1" height="0.6" fill="#ff5252" fill-opacity="0.72"/><rect x="225.82" y="504.5" width="1.1" height="1.3" fill="#ff5252" fill-opacity="0.72"/><rect x="227.08" y="504.5" width="1.1" height="1.7" fill="#ff5252" fill-opacity="0.72"/><rect x="228.35" y="504.5" width="1.1" height="2.4" fill="#ff5252" fill-opacity="0.72"/><rect x="229.61" y="504.5" width="1.1" height="3.2" fill="#ff5252" fill-opacity="0.72"/><rect x="230.87" y="504.5" width="1.1" height="3.8" fill="#ff5252" fill-opacity="0.72"/><rect x="232.14" y="504.5" width="1.1" height="3.4" fill="#ffcdd2" fill-opacity="0.72"/><rect x="233.40" y="504.5" width="1.1" height="3.1" fill="#ffcdd2" fill-opacity="0.72"/><rect x="234.66" y="504.5" width="1.1" height="2.9" fill="#ffcdd2" fill-opacity="0.72"/><rect x="235.93" y="504.5" width="1.1" height="2.6" fill="#ffcdd2" fill-opacity="0.72"/><rect x="237.19" y="504.5" width="1.1" height="2.3" fill="#ffcdd2" fill-opacity="0.72"/><rect x="238.45" y="504.5" width="1.1" height="2.3" fill="#ffcdd2" fill-opacity="0.72"/><rect x="239.72" y="504.5" width="1.1" height="3.1" fill="#ff5252" fill-opacity="0.72"/><rect x="240.98" y="504.5" width="1.1" height="4.1" fill="#ff5252" fill-opacity="0.72"/><rect x="242.24" y="504.5" width="1.1" height="4.5" fill="#ff5252" fill-opacity="0.72"/><rect x="243.51" y="504.5" width="1.1" height="5.1" fill="#ff5252" fill-opacity="0.72"/><rect x="244.77" y="504.5" width="1.1" height="6.0" fill="#ff5252" fill-opacity="0.72"/><rect x="246.03" y="504.5" width="1.1" height="5.2" fill="#ffcdd2" fill-opacity="0.72"/><rect x="247.30" y="504.5" width="1.1" height="4.0" fill="#ffcdd2" fill-opacity="0.72"/><rect x="248.56" y="504.5" width="1.1" height="3.0" fill="#ffcdd2" fill-opacity="0.72"/><rect x="249.82" y="504.5" width="1.1" height="2.1" fill="#ffcdd2" fill-opacity="0.72"/><rect x="251.09" y="504.5" width="1.1" height="0.9" fill="#ffcdd2" fill-opacity="0.72"/><rect x="252.35" y="504.5" width="1.1" height="0.2" fill="#ffcdd2" fill-opacity="0.72"/><rect x="253.61" y="503.7" width="1.1" height="0.8" fill="#26a69a" fill-opacity="0.72"/><rect x="254.88" y="503.3" width="1.1" height="1.2" fill="#26a69a" fill-opacity="0.72"/><rect x="256.14" y="502.8" width="1.1" height="1.7" fill="#26a69a" fill-opacity="0.72"/><rect x="257.40" y="502.1" width="1.1" height="2.4" fill="#26a69a" fill-opacity="0.72"/><rect x="258.67" y="501.7" width="1.1" height="2.8" fill="#26a69a" fill-opacity="0.72"/><rect x="259.93" y="501.4" width="1.1" height="3.1" fill="#26a69a" fill-opacity="0.72"/><rect x="261.19" y="501.4" width="1.1" height="3.1" fill="#b2dfdb" fill-opacity="0.72"/><rect x="262.46" y="502.0" width="1.1" height="2.5" fill="#b2dfdb" fill-opacity="0.72"/><rect x="263.72" y="502.6" width="1.1" height="1.9" fill="#b2dfdb" fill-opacity="0.72"/><rect x="264.98" y="502.7" width="1.1" height="1.8" fill="#b2dfdb" fill-opacity="0.72"/><rect x="266.25" y="503.2" width="1.1" height="1.3" fill="#b2dfdb" fill-opacity="0.72"/><rect x="267.51" y="504.0" width="1.1" height="0.5" fill="#b2dfdb" fill-opacity="0.72"/><rect x="268.77" y="504.5" width="1.1" height="0.1" fill="#ff5252" fill-opacity="0.72"/><rect x="270.04" y="504.5" width="1.1" height="0.9" fill="#ff5252" fill-opacity="0.72"/><rect x="271.30" y="504.5" width="1.1" height="1.9" fill="#ff5252" fill-opacity="0.72"/><rect x="272.56" y="504.5" width="1.1" height="3.0" fill="#ff5252" fill-opacity="0.72"/><rect x="273.83" y="504.5" width="1.1" height="4.5" fill="#ff5252" fill-opacity="0.72"/><rect x="275.09" y="504.5" width="1.1" height="5.3" fill="#ff5252" fill-opacity="0.72"/><rect x="276.35" y="504.5" width="1.1" height="6.4" fill="#ff5252" fill-opacity="0.72"/><rect x="277.62" y="504.5" width="1.1" height="7.1" fill="#ff5252" fill-opacity="0.72"/><rect x="278.88" y="504.5" width="1.1" height="6.5" fill="#ffcdd2" fill-opacity="0.72"/><rect x="280.14" y="504.5" width="1.1" height="5.8" fill="#ffcdd2" fill-opacity="0.72"/><rect x="281.41" y="504.5" width="1.1" height="4.7" fill="#ffcdd2" fill-opacity="0.72"/><rect x="282.67" y="504.5" width="1.1" height="4.2" fill="#ffcdd2" fill-opacity="0.72"/><rect x="283.93" y="504.5" width="1.1" height="3.4" fill="#ffcdd2" fill-opacity="0.72"/><rect x="285.20" y="504.5" width="1.1" height="2.6" fill="#ffcdd2" fill-opacity="0.72"/><rect x="286.46" y="504.5" width="1.1" height="1.9" fill="#ffcdd2" fill-opacity="0.72"/><rect x="287.72" y="504.5" width="1.1" height="0.9" fill="#ffcdd2" fill-opacity="0.72"/><rect x="288.99" y="504.5" width="1.1" height="0.4" fill="#ffcdd2" fill-opacity="0.72"/><rect x="290.25" y="504.3" width="1.1" height="0.2" fill="#26a69a" fill-opacity="0.72"/><rect x="291.51" y="503.3" width="1.1" height="1.2" fill="#26a69a" fill-opacity="0.72"/><rect x="292.78" y="502.6" width="1.1" height="1.9" fill="#26a69a" fill-opacity="0.72"/><rect x="294.04" y="502.6" width="1.1" height="1.9" fill="#b2dfdb" fill-opacity="0.72"/><rect x="295.30" y="503.0" width="1.1" height="1.5" fill="#b2dfdb" fill-opacity="0.72"/><rect x="296.57" y="503.3" width="1.1" height="1.2" fill="#b2dfdb" fill-opacity="0.72"/><rect x="297.83" y="502.4" width="1.1" height="2.1" fill="#26a69a" fill-opacity="0.72"/><rect x="299.09" y="501.8" width="1.1" height="2.7" fill="#26a69a" fill-opacity="0.72"/><rect x="300.36" y="500.9" width="1.1" height="3.6" fill="#26a69a" fill-opacity="0.72"/><rect x="301.62" y="500.3" width="1.1" height="4.2" fill="#26a69a" fill-opacity="0.72"/><rect x="302.88" y="499.2" width="1.1" height="5.3" fill="#26a69a" fill-opacity="0.72"/><rect x="304.15" y="497.8" width="1.1" height="6.7" fill="#26a69a" fill-opacity="0.72"/><rect x="305.41" y="496.7" width="1.1" height="7.8" fill="#26a69a" fill-opacity="0.72"/><rect x="306.67" y="495.2" width="1.1" height="9.3" fill="#26a69a" fill-opacity="0.72"/><rect x="307.94" y="494.2" width="1.1" height="10.3" fill="#26a69a" fill-opacity="0.72"/><rect x="309.20" y="494.6" width="1.1" height="9.9" fill="#b2dfdb" fill-opacity="0.72"/><rect x="310.46" y="494.8" width="1.1" height="9.7" fill="#b2dfdb" fill-opacity="0.72"/><rect x="311.73" y="496.0" width="1.1" height="8.5" fill="#b2dfdb" fill-opacity="0.72"/><rect x="312.99" y="497.5" width="1.1" height="7.0" fill="#b2dfdb" fill-opacity="0.72"/><rect x="314.25" y="498.7" width="1.1" height="5.8" fill="#b2dfdb" fill-opacity="0.72"/><rect x="315.52" y="500.2" width="1.1" height="4.3" fill="#b2dfdb" fill-opacity="0.72"/><rect x="316.78" y="501.2" width="1.1" height="3.3" fill="#b2dfdb" fill-opacity="0.72"/><rect x="318.04" y="502.3" width="1.1" height="2.2" fill="#b2dfdb" fill-opacity="0.72"/><rect x="319.31" y="502.1" width="1.1" height="2.4" fill="#26a69a" fill-opacity="0.72"/><rect x="320.57" y="502.2" width="1.1" height="2.3" fill="#b2dfdb" fill-opacity="0.72"/><rect x="321.83" y="502.4" width="1.1" height="2.1" fill="#b2dfdb" fill-opacity="0.72"/><rect x="323.10" y="502.9" width="1.1" height="1.6" fill="#b2dfdb" fill-opacity="0.72"/><rect x="324.36" y="503.3" width="1.1" height="1.2" fill="#b2dfdb" fill-opacity="0.72"/><rect x="325.62" y="503.4" width="1.1" height="1.1" fill="#b2dfdb" fill-opacity="0.72"/><rect x="326.89" y="503.8" width="1.1" height="0.7" fill="#b2dfdb" fill-opacity="0.72"/><rect x="328.15" y="504.1" width="1.1" height="0.4" fill="#b2dfdb" fill-opacity="0.72"/><rect x="329.41" y="504.4" width="1.1" height="0.1" fill="#b2dfdb" fill-opacity="0.72"/><rect x="330.68" y="504.5" width="1.1" height="0.1" fill="#ff5252" fill-opacity="0.72"/><rect x="331.94" y="504.5" width="1.1" height="0.6" fill="#ff5252" fill-opacity="0.72"/><rect x="333.20" y="504.5" width="1.1" height="1.2" fill="#ff5252" fill-opacity="0.72"/><rect x="334.47" y="504.5" width="1.1" height="1.8" fill="#ff5252" fill-opacity="0.72"/><rect x="335.73" y="504.5" width="1.1" height="2.8" fill="#ff5252" fill-opacity="0.72"/><rect x="336.99" y="504.5" width="1.1" height="3.3" fill="#ff5252" fill-opacity="0.72"/><rect x="338.26" y="504.5" width="1.1" height="3.9" fill="#ff5252" fill-opacity="0.72"/><rect x="339.52" y="504.5" width="1.1" height="4.5" fill="#ff5252" fill-opacity="0.72"/><rect x="340.78" y="504.5" width="1.1" height="3.9" fill="#ffcdd2" fill-opacity="0.72"/><rect x="342.05" y="504.5" width="1.1" height="3.9" fill="#ffcdd2" fill-opacity="0.72"/><rect x="343.31" y="504.5" width="1.1" height="4.5" fill="#ff5252" fill-opacity="0.72"/><rect x="344.57" y="504.5" width="1.1" height="4.9" fill="#ff5252" fill-opacity="0.72"/><rect x="345.84" y="504.5" width="1.1" height="4.9" fill="#ff5252" fill-opacity="0.72"/><rect x="347.10" y="504.5" width="1.1" height="4.5" fill="#ffcdd2" fill-opacity="0.72"/><rect x="348.36" y="504.5" width="1.1" height="4.4" fill="#ffcdd2" fill-opacity="0.72"/><rect x="349.63" y="504.5" width="1.1" height="4.3" fill="#ffcdd2" fill-opacity="0.72"/><rect x="350.89" y="504.5" width="1.1" height="4.1" fill="#ffcdd2" fill-opacity="0.72"/><rect x="352.15" y="504.5" width="1.1" height="3.9" fill="#ffcdd2" fill-opacity="0.72"/><rect x="353.42" y="504.5" width="1.1" height="3.9" fill="#ff5252" fill-opacity="0.72"/><rect x="354.68" y="504.5" width="1.1" height="3.5" fill="#ffcdd2" fill-opacity="0.72"/><rect x="355.94" y="504.5" width="1.1" height="3.6" fill="#ff5252" fill-opacity="0.72"/><rect x="357.21" y="504.5" width="1.1" height="3.0" fill="#ffcdd2" fill-opacity="0.72"/><rect x="358.47" y="504.5" width="1.1" height="2.7" fill="#ffcdd2" fill-opacity="0.72"/><rect x="359.73" y="504.5" width="1.1" height="2.5" fill="#ffcdd2" fill-opacity="0.72"/><rect x="361.00" y="504.5" width="1.1" height="2.1" fill="#ffcdd2" fill-opacity="0.72"/><rect x="362.26" y="504.5" width="1.1" height="1.6" fill="#ffcdd2" fill-opacity="0.72"/><rect x="363.52" y="504.5" width="1.1" height="1.5" fill="#ffcdd2" fill-opacity="0.72"/><rect x="364.79" y="504.5" width="1.1" height="1.1" fill="#ffcdd2" fill-opacity="0.72"/><rect x="366.05" y="504.5" width="1.1" height="1.0" fill="#ffcdd2" fill-opacity="0.72"/><rect x="367.31" y="504.5" width="1.1" height="0.6" fill="#ffcdd2" fill-opacity="0.72"/><rect x="368.58" y="504.5" width="1.1" height="0.0" fill="#ffcdd2" fill-opacity="0.72"/><rect x="369.84" y="504.5" width="1.1" height="0.1" fill="#ff5252" fill-opacity="0.72"/><rect x="371.10" y="504.1" width="1.1" height="0.4" fill="#26a69a" fill-opacity="0.72"/><rect x="372.37" y="503.5" width="1.1" height="1.0" fill="#26a69a" fill-opacity="0.72"/><rect x="373.63" y="504.4" width="1.1" height="0.1" fill="#b2dfdb" fill-opacity="0.72"/><rect x="374.89" y="504.5" width="1.1" height="0.4" fill="#ff5252" fill-opacity="0.72"/><rect x="376.16" y="503.8" width="1.1" height="0.7" fill="#26a69a" fill-opacity="0.72"/><rect x="377.42" y="503.1" width="1.1" height="1.4" fill="#26a69a" fill-opacity="0.72"/><rect x="378.68" y="503.6" width="1.1" height="0.9" fill="#b2dfdb" fill-opacity="0.72"/><rect x="379.95" y="504.3" width="1.1" height="0.2" fill="#b2dfdb" fill-opacity="0.72"/><rect x="381.21" y="504.5" width="1.1" height="0.2" fill="#ff5252" fill-opacity="0.72"/><rect x="382.47" y="504.5" width="1.1" height="0.6" fill="#ff5252" fill-opacity="0.72"/><rect x="383.74" y="504.5" width="1.1" height="1.0" fill="#ff5252" fill-opacity="0.72"/><rect x="385.00" y="504.5" width="1.1" height="0.7" fill="#ffcdd2" fill-opacity="0.72"/><rect x="386.26" y="504.5" width="1.1" height="0.2" fill="#ffcdd2" fill-opacity="0.72"/><rect x="387.53" y="503.6" width="1.1" height="0.9" fill="#26a69a" fill-opacity="0.72"/><rect x="388.79" y="502.9" width="1.1" height="1.6" fill="#26a69a" fill-opacity="0.72"/><rect x="390.05" y="502.9" width="1.1" height="1.6" fill="#26a69a" fill-opacity="0.72"/><rect x="391.32" y="503.0" width="1.1" height="1.5" fill="#b2dfdb" fill-opacity="0.72"/><rect x="392.58" y="503.9" width="1.1" height="0.6" fill="#b2dfdb" fill-opacity="0.72"/><rect x="393.84" y="504.4" width="1.1" height="0.1" fill="#b2dfdb" fill-opacity="0.72"/><rect x="395.11" y="504.5" width="1.1" height="0.3" fill="#ff5252" fill-opacity="0.72"/><rect x="396.37" y="504.5" width="1.1" height="1.1" fill="#ff5252" fill-opacity="0.72"/><rect x="397.63" y="504.5" width="1.1" height="1.4" fill="#ff5252" fill-opacity="0.72"/><rect x="398.90" y="504.5" width="1.1" height="0.4" fill="#ffcdd2" fill-opacity="0.72"/><rect x="400.16" y="504.1" width="1.1" height="0.4" fill="#26a69a" fill-opacity="0.72"/><rect x="401.42" y="503.0" width="1.1" height="1.5" fill="#26a69a" fill-opacity="0.72"/><rect x="402.69" y="503.9" width="1.1" height="0.6" fill="#b2dfdb" fill-opacity="0.72"/><rect x="403.95" y="504.4" width="1.1" height="0.1" fill="#b2dfdb" fill-opacity="0.72"/><rect x="405.21" y="504.5" width="1.1" height="1.1" fill="#ff5252" fill-opacity="0.72"/><rect x="406.48" y="504.5" width="1.1" height="2.9" fill="#ff5252" fill-opacity="0.72"/><rect x="407.74" y="504.5" width="1.1" height="4.2" fill="#ff5252" fill-opacity="0.72"/><rect x="409.00" y="504.5" width="1.1" height="5.7" fill="#ff5252" fill-opacity="0.72"/><rect x="410.27" y="504.5" width="1.1" height="5.0" fill="#ffcdd2" fill-opacity="0.72"/><rect x="411.53" y="504.5" width="1.1" height="4.3" fill="#ffcdd2" fill-opacity="0.72"/><rect x="412.79" y="504.5" width="1.1" height="4.0" fill="#ffcdd2" fill-opacity="0.72"/><rect x="414.06" y="504.5" width="1.1" height="3.4" fill="#ffcdd2" fill-opacity="0.72"/><rect x="415.32" y="504.5" width="1.1" height="2.9" fill="#ffcdd2" fill-opacity="0.72"/><rect x="416.58" y="504.5" width="1.1" height="2.5" fill="#ffcdd2" fill-opacity="0.72"/><rect x="417.85" y="504.5" width="1.1" height="1.2" fill="#ffcdd2" fill-opacity="0.72"/><rect x="419.11" y="504.5" width="1.1" height="0.5" fill="#ffcdd2" fill-opacity="0.72"/><rect x="420.37" y="504.5" width="1.1" height="0.0" fill="#ffcdd2" fill-opacity="0.72"/><rect x="421.64" y="503.7" width="1.1" height="0.8" fill="#26a69a" fill-opacity="0.72"/><rect x="422.90" y="503.4" width="1.1" height="1.1" fill="#26a69a" fill-opacity="0.72"/><rect x="424.16" y="503.0" width="1.1" height="1.5" fill="#26a69a" fill-opacity="0.72"/><rect x="425.43" y="502.1" width="1.1" height="2.4" fill="#26a69a" fill-opacity="0.72"/><rect x="426.69" y="501.8" width="1.1" height="2.7" fill="#26a69a" fill-opacity="0.72"/><rect x="427.95" y="501.2" width="1.1" height="3.3" fill="#26a69a" fill-opacity="0.72"/><rect x="429.22" y="501.0" width="1.1" height="3.5" fill="#26a69a" fill-opacity="0.72"/><rect x="430.48" y="500.2" width="1.1" height="4.3" fill="#26a69a" fill-opacity="0.72"/><rect x="431.74" y="500.1" width="1.1" height="4.4" fill="#26a69a" fill-opacity="0.72"/><rect x="433.01" y="499.5" width="1.1" height="5.0" fill="#26a69a" fill-opacity="0.72"/><rect x="434.27" y="499.0" width="1.1" height="5.5" fill="#26a69a" fill-opacity="0.72"/><rect x="435.53" y="498.6" width="1.1" height="5.9" fill="#26a69a" fill-opacity="0.72"/><rect x="436.80" y="498.7" width="1.1" height="5.8" fill="#b2dfdb" fill-opacity="0.72"/><rect x="438.06" y="499.5" width="1.1" height="5.0" fill="#b2dfdb" fill-opacity="0.72"/><rect x="439.32" y="500.0" width="1.1" height="4.5" fill="#b2dfdb" fill-opacity="0.72"/><rect x="440.59" y="500.3" width="1.1" height="4.2" fill="#b2dfdb" fill-opacity="0.72"/><rect x="441.85" y="499.8" width="1.1" height="4.7" fill="#26a69a" fill-opacity="0.72"/><rect x="443.11" y="498.9" width="1.1" height="5.6" fill="#26a69a" fill-opacity="0.72"/><rect x="444.38" y="498.5" width="1.1" height="6.0" fill="#26a69a" fill-opacity="0.72"/><rect x="445.64" y="498.9" width="1.1" height="5.6" fill="#b2dfdb" fill-opacity="0.72"/><rect x="446.90" y="499.5" width="1.1" height="5.0" fill="#b2dfdb" fill-opacity="0.72"/><rect x="448.17" y="499.8" width="1.1" height="4.7" fill="#b2dfdb" fill-opacity="0.72"/><rect x="449.43" y="500.3" width="1.1" height="4.2" fill="#b2dfdb" fill-opacity="0.72"/><rect x="450.69" y="501.0" width="1.1" height="3.5" fill="#b2dfdb" fill-opacity="0.72"/><rect x="451.96" y="501.0" width="1.1" height="3.5" fill="#b2dfdb" fill-opacity="0.72"/><rect x="453.22" y="501.5" width="1.1" height="3.0" fill="#b2dfdb" fill-opacity="0.72"/><rect x="454.48" y="501.5" width="1.1" height="3.0" fill="#26a69a" fill-opacity="0.72"/><rect x="455.75" y="501.7" width="1.1" height="2.8" fill="#b2dfdb" fill-opacity="0.72"/><rect x="457.01" y="501.8" width="1.1" height="2.7" fill="#b2dfdb" fill-opacity="0.72"/><rect x="458.27" y="502.4" width="1.1" height="2.1" fill="#b2dfdb" fill-opacity="0.72"/><rect x="459.54" y="502.4" width="1.1" height="2.1" fill="#b2dfdb" fill-opacity="0.72"/><rect x="460.80" y="502.5" width="1.1" height="2.0" fill="#b2dfdb" fill-opacity="0.72"/><rect x="462.06" y="503.1" width="1.1" height="1.4" fill="#b2dfdb" fill-opacity="0.72"/><rect x="463.33" y="503.8" width="1.1" height="0.7" fill="#b2dfdb" fill-opacity="0.72"/><rect x="464.59" y="504.5" width="1.1" height="0.3" fill="#ff5252" fill-opacity="0.72"/><rect x="465.85" y="504.5" width="1.1" height="0.8" fill="#ff5252" fill-opacity="0.72"/><rect x="467.12" y="504.5" width="1.1" height="1.8" fill="#ff5252" fill-opacity="0.72"/><rect x="468.38" y="504.5" width="1.1" height="2.4" fill="#ff5252" fill-opacity="0.72"/><rect x="469.64" y="504.5" width="1.1" height="3.1" fill="#ff5252" fill-opacity="0.72"/><rect x="470.91" y="504.5" width="1.1" height="3.5" fill="#ff5252" fill-opacity="0.72"/><rect x="472.17" y="504.5" width="1.1" height="2.9" fill="#ffcdd2" fill-opacity="0.72"/><rect x="473.43" y="504.5" width="1.1" height="2.7" fill="#ffcdd2" fill-opacity="0.72"/><rect x="474.70" y="504.5" width="1.1" height="2.7" fill="#ffcdd2" fill-opacity="0.72"/><rect x="475.96" y="504.5" width="1.1" height="2.5" fill="#ffcdd2" fill-opacity="0.72"/><rect x="477.22" y="504.5" width="1.1" height="2.1" fill="#ffcdd2" fill-opacity="0.72"/><rect x="478.49" y="504.5" width="1.1" height="2.4" fill="#ff5252" fill-opacity="0.72"/><rect x="479.75" y="504.5" width="1.1" height="3.2" fill="#ff5252" fill-opacity="0.72"/><rect x="481.01" y="504.5" width="1.1" height="4.1" fill="#ff5252" fill-opacity="0.72"/><rect x="482.28" y="504.5" width="1.1" height="4.8" fill="#ff5252" fill-opacity="0.72"/><rect x="483.54" y="504.5" width="1.1" height="5.0" fill="#ff5252" fill-opacity="0.72"/><rect x="484.80" y="504.5" width="1.1" height="4.0" fill="#ffcdd2" fill-opacity="0.72"/><rect x="486.07" y="504.5" width="1.1" height="3.7" fill="#ffcdd2" fill-opacity="0.72"/><rect x="487.33" y="504.5" width="1.1" height="2.9" fill="#ffcdd2" fill-opacity="0.72"/><rect x="488.59" y="504.5" width="1.1" height="2.5" fill="#ffcdd2" fill-opacity="0.72"/><rect x="489.86" y="504.5" width="1.1" height="1.7" fill="#ffcdd2" fill-opacity="0.72"/><rect x="491.12" y="504.5" width="1.1" height="1.2" fill="#ffcdd2" fill-opacity="0.72"/><rect x="492.38" y="504.5" width="1.1" height="0.7" fill="#ffcdd2" fill-opacity="0.72"/><rect x="493.65" y="504.2" width="1.1" height="0.3" fill="#26a69a" fill-opacity="0.72"/><rect x="494.91" y="503.2" width="1.1" height="1.3" fill="#26a69a" fill-opacity="0.72"/><rect x="496.17" y="502.0" width="1.1" height="2.5" fill="#26a69a" fill-opacity="0.72"/><rect x="497.44" y="500.8" width="1.1" height="3.7" fill="#26a69a" fill-opacity="0.72"/><rect x="498.70" y="499.7" width="1.1" height="4.8" fill="#26a69a" fill-opacity="0.72"/><rect x="499.96" y="499.0" width="1.1" height="5.5" fill="#26a69a" fill-opacity="0.72"/><rect x="501.23" y="497.7" width="1.1" height="6.8" fill="#26a69a" fill-opacity="0.72"/><rect x="502.49" y="496.7" width="1.1" height="7.8" fill="#26a69a" fill-opacity="0.72"/><rect x="503.75" y="497.8" width="1.1" height="6.7" fill="#b2dfdb" fill-opacity="0.72"/><rect x="505.02" y="498.8" width="1.1" height="5.7" fill="#b2dfdb" fill-opacity="0.72"/><rect x="506.28" y="500.1" width="1.1" height="4.4" fill="#b2dfdb" fill-opacity="0.72"/><rect x="507.54" y="501.8" width="1.1" height="2.7" fill="#b2dfdb" fill-opacity="0.72"/><rect x="508.81" y="503.0" width="1.1" height="1.5" fill="#b2dfdb" fill-opacity="0.72"/><rect x="510.07" y="503.9" width="1.1" height="0.6" fill="#b2dfdb" fill-opacity="0.72"/><rect x="511.33" y="504.5" width="1.1" height="0.6" fill="#ff5252" fill-opacity="0.72"/><rect x="512.60" y="504.5" width="1.1" height="1.8" fill="#ff5252" fill-opacity="0.72"/><rect x="513.86" y="504.5" width="1.1" height="2.8" fill="#ff5252" fill-opacity="0.72"/><rect x="515.12" y="504.5" width="1.1" height="4.0" fill="#ff5252" fill-opacity="0.72"/><rect x="516.39" y="504.5" width="1.1" height="4.7" fill="#ff5252" fill-opacity="0.72"/><rect x="517.65" y="504.5" width="1.1" height="4.6" fill="#ffcdd2" fill-opacity="0.72"/><rect x="518.91" y="504.5" width="1.1" height="3.9" fill="#ffcdd2" fill-opacity="0.72"/><rect x="520.18" y="504.5" width="1.1" height="3.6" fill="#ffcdd2" fill-opacity="0.72"/><rect x="521.44" y="504.5" width="1.1" height="3.4" fill="#ffcdd2" fill-opacity="0.72"/><rect x="522.70" y="504.5" width="1.1" height="2.8" fill="#ffcdd2" fill-opacity="0.72"/><rect x="523.97" y="504.5" width="1.1" height="2.4" fill="#ffcdd2" fill-opacity="0.72"/><rect x="525.23" y="504.5" width="1.1" height="1.6" fill="#ffcdd2" fill-opacity="0.72"/><rect x="526.49" y="504.5" width="1.1" height="1.3" fill="#ffcdd2" fill-opacity="0.72"/><rect x="527.76" y="504.5" width="1.1" height="1.2" fill="#ffcdd2" fill-opacity="0.72"/><rect x="529.02" y="504.5" width="1.1" height="0.9" fill="#ffcdd2" fill-opacity="0.72"/><rect x="530.28" y="504.5" width="1.1" height="0.7" fill="#ffcdd2" fill-opacity="0.72"/><rect x="531.55" y="504.5" width="1.1" height="0.4" fill="#ffcdd2" fill-opacity="0.72"/><rect x="532.81" y="504.5" width="1.1" height="0.2" fill="#ffcdd2" fill-opacity="0.72"/><rect x="534.07" y="504.5" width="1.1" height="0.1" fill="#ffcdd2" fill-opacity="0.72"/><rect x="535.34" y="504.3" width="1.1" height="0.2" fill="#26a69a" fill-opacity="0.72"/><rect x="536.60" y="504.0" width="1.1" height="0.5" fill="#26a69a" fill-opacity="0.72"/><rect x="537.86" y="503.6" width="1.1" height="0.9" fill="#26a69a" fill-opacity="0.72"/><rect x="539.13" y="504.0" width="1.1" height="0.5" fill="#b2dfdb" fill-opacity="0.72"/><rect x="540.39" y="503.9" width="1.1" height="0.6" fill="#26a69a" fill-opacity="0.72"/><rect x="541.65" y="503.3" width="1.1" height="1.2" fill="#26a69a" fill-opacity="0.72"/><rect x="542.92" y="502.6" width="1.1" height="1.9" fill="#26a69a" fill-opacity="0.72"/><rect x="544.18" y="502.7" width="1.1" height="1.8" fill="#b2dfdb" fill-opacity="0.72"/><rect x="545.44" y="502.2" width="1.1" height="2.3" fill="#26a69a" fill-opacity="0.72"/><rect x="546.71" y="501.5" width="1.1" height="3.0" fill="#26a69a" fill-opacity="0.72"/><rect x="547.97" y="501.3" width="1.1" height="3.2" fill="#26a69a" fill-opacity="0.72"/><rect x="549.23" y="501.5" width="1.1" height="3.0" fill="#b2dfdb" fill-opacity="0.72"/><rect x="550.50" y="502.0" width="1.1" height="2.5" fill="#b2dfdb" fill-opacity="0.72"/><rect x="551.76" y="502.7" width="1.1" height="1.8" fill="#b2dfdb" fill-opacity="0.72"/><rect x="553.02" y="503.2" width="1.1" height="1.3" fill="#b2dfdb" fill-opacity="0.72"/><rect x="554.29" y="504.0" width="1.1" height="0.5" fill="#b2dfdb" fill-opacity="0.72"/><rect x="555.55" y="504.5" width="1.1" height="0.1" fill="#ff5252" fill-opacity="0.72"/><rect x="556.81" y="504.5" width="1.1" height="0.9" fill="#ff5252" fill-opacity="0.72"/><rect x="558.08" y="504.5" width="1.1" height="2.1" fill="#ff5252" fill-opacity="0.72"/><rect x="559.34" y="504.5" width="1.1" height="2.5" fill="#ff5252" fill-opacity="0.72"/><rect x="560.60" y="504.5" width="1.1" height="3.0" fill="#ff5252" fill-opacity="0.72"/><rect x="561.87" y="504.5" width="1.1" height="2.3" fill="#ffcdd2" fill-opacity="0.72"/><rect x="563.13" y="504.5" width="1.1" height="1.6" fill="#ffcdd2" fill-opacity="0.72"/><rect x="564.39" y="504.5" width="1.1" height="1.0" fill="#ffcdd2" fill-opacity="0.72"/><rect x="565.66" y="504.5" width="1.1" height="0.5" fill="#ffcdd2" fill-opacity="0.72"/><rect x="566.92" y="504.5" width="1.1" height="0.3" fill="#ffcdd2" fill-opacity="0.72"/><rect x="568.18" y="504.5" width="1.1" height="0.5" fill="#ff5252" fill-opacity="0.72"/><rect x="569.45" y="504.5" width="1.1" height="0.8" fill="#ff5252" fill-opacity="0.72"/><rect x="570.71" y="504.5" width="1.1" height="1.4" fill="#ff5252" fill-opacity="0.72"/><rect x="571.97" y="504.5" width="1.1" height="1.5" fill="#ff5252" fill-opacity="0.72"/><rect x="573.24" y="504.5" width="1.1" height="1.0" fill="#ffcdd2" fill-opacity="0.72"/><rect x="574.50" y="504.5" width="1.1" height="0.6" fill="#ffcdd2" fill-opacity="0.72"/><rect x="575.76" y="504.4" width="1.1" height="0.1" fill="#26a69a" fill-opacity="0.72"/><rect x="577.03" y="504.4" width="1.1" height="0.1" fill="#b2dfdb" fill-opacity="0.72"/><rect x="578.29" y="504.5" width="1.1" height="0.0" fill="#b2dfdb" fill-opacity="0.72"/><rect x="579.55" y="504.4" width="1.1" height="0.1" fill="#26a69a" fill-opacity="0.72"/><rect x="580.82" y="504.5" width="1.1" height="0.1" fill="#ff5252" fill-opacity="0.72"/><rect x="582.08" y="504.5" width="1.1" height="0.3" fill="#ff5252" fill-opacity="0.72"/><rect x="583.34" y="504.5" width="1.1" height="1.0" fill="#ff5252" fill-opacity="0.72"/><rect x="584.61" y="504.5" width="1.1" height="1.8" fill="#ff5252" fill-opacity="0.72"/><rect x="585.87" y="504.5" width="1.1" height="1.9" fill="#ff5252" fill-opacity="0.72"/><rect x="587.13" y="504.5" width="1.1" height="1.5" fill="#ffcdd2" fill-opacity="0.72"/><rect x="588.40" y="504.5" width="1.1" height="0.7" fill="#ffcdd2" fill-opacity="0.72"/><rect x="589.66" y="504.5" width="1.1" height="0.6" fill="#ffcdd2" fill-opacity="0.72"/><rect x="590.92" y="504.5" width="1.1" height="1.3" fill="#ff5252" fill-opacity="0.72"/><rect x="592.19" y="504.5" width="1.1" height="2.0" fill="#ff5252" fill-opacity="0.72"/><rect x="593.45" y="504.5" width="1.1" height="2.6" fill="#ff5252" fill-opacity="0.72"/><rect x="594.71" y="504.5" width="1.1" height="2.3" fill="#ffcdd2" fill-opacity="0.72"/><rect x="595.98" y="504.5" width="1.1" height="2.2" fill="#ffcdd2" fill-opacity="0.72"/><rect x="597.24" y="504.5" width="1.1" height="1.9" fill="#ffcdd2" fill-opacity="0.72"/><rect x="598.50" y="504.5" width="1.1" height="1.2" fill="#ffcdd2" fill-opacity="0.72"/><rect x="599.77" y="504.5" width="1.1" height="1.2" fill="#ffcdd2" fill-opacity="0.72"/><rect x="601.03" y="504.5" width="1.1" height="1.1" fill="#ffcdd2" fill-opacity="0.72"/><rect x="602.29" y="504.5" width="1.1" height="1.3" fill="#ff5252" fill-opacity="0.72"/><rect x="603.56" y="504.5" width="1.1" height="1.6" fill="#ff5252" fill-opacity="0.72"/><rect x="604.82" y="504.5" width="1.1" height="1.9" fill="#ff5252" fill-opacity="0.72"/><rect x="606.08" y="504.5" width="1.1" height="2.2" fill="#ff5252" fill-opacity="0.72"/><rect x="607.35" y="504.5" width="1.1" height="2.3" fill="#ff5252" fill-opacity="0.72"/><rect x="608.61" y="504.5" width="1.1" height="2.6" fill="#ff5252" fill-opacity="0.72"/><rect x="609.87" y="504.5" width="1.1" height="2.6" fill="#ff5252" fill-opacity="0.72"/><rect x="611.14" y="504.5" width="1.1" height="2.9" fill="#ff5252" fill-opacity="0.72"/><rect x="612.40" y="504.5" width="1.1" height="3.0" fill="#ff5252" fill-opacity="0.72"/><rect x="613.66" y="504.5" width="1.1" height="3.6" fill="#ff5252" fill-opacity="0.72"/><rect x="614.93" y="504.5" width="1.1" height="3.6" fill="#ff5252" fill-opacity="0.72"/><rect x="616.19" y="504.5" width="1.1" height="4.1" fill="#ff5252" fill-opacity="0.72"/><rect x="617.45" y="504.5" width="1.1" height="4.7" fill="#ff5252" fill-opacity="0.72"/><rect x="618.72" y="504.5" width="1.1" height="3.2" fill="#ffcdd2" fill-opacity="0.72"/><rect x="619.98" y="504.5" width="1.1" height="1.6" fill="#ffcdd2" fill-opacity="0.72"/><rect x="621.24" y="504.3" width="1.1" height="0.2" fill="#26a69a" fill-opacity="0.72"/><rect x="622.51" y="503.1" width="1.1" height="1.4" fill="#26a69a" fill-opacity="0.72"/><rect x="623.77" y="502.5" width="1.1" height="2.0" fill="#26a69a" fill-opacity="0.72"/><rect x="625.03" y="502.3" width="1.1" height="2.2" fill="#26a69a" fill-opacity="0.72"/><rect x="626.30" y="501.7" width="1.1" height="2.8" fill="#26a69a" fill-opacity="0.72"/><rect x="627.56" y="501.7" width="1.1" height="2.8" fill="#b2dfdb" fill-opacity="0.72"/><rect x="628.82" y="501.7" width="1.1" height="2.8" fill="#b2dfdb" fill-opacity="0.72"/><rect x="630.09" y="501.7" width="1.1" height="2.8" fill="#b2dfdb" fill-opacity="0.72"/><rect x="631.35" y="502.3" width="1.1" height="2.2" fill="#b2dfdb" fill-opacity="0.72"/><rect x="632.61" y="502.5" width="1.1" height="2.0" fill="#b2dfdb" fill-opacity="0.72"/><rect x="633.88" y="502.8" width="1.1" height="1.7" fill="#b2dfdb" fill-opacity="0.72"/><rect x="635.14" y="503.1" width="1.1" height="1.4" fill="#b2dfdb" fill-opacity="0.72"/><rect x="636.40" y="503.3" width="1.1" height="1.2" fill="#b2dfdb" fill-opacity="0.72"/><rect x="637.67" y="503.4" width="1.1" height="1.1" fill="#b2dfdb" fill-opacity="0.72"/><rect x="638.93" y="504.0" width="1.1" height="0.5" fill="#b2dfdb" fill-opacity="0.72"/><rect x="640.19" y="504.2" width="1.1" height="0.3" fill="#b2dfdb" fill-opacity="0.72"/><rect x="641.46" y="504.5" width="1.1" height="0.1" fill="#ff5252" fill-opacity="0.72"/><rect x="642.72" y="504.5" width="1.1" height="0.0" fill="#ffcdd2" fill-opacity="0.72"/><rect x="643.98" y="504.5" width="1.1" height="0.0" fill="#26a69a" fill-opacity="0.72"/><rect x="645.25" y="504.5" width="1.1" height="0.2" fill="#ff5252" fill-opacity="0.72"/><rect x="646.51" y="504.5" width="1.1" height="0.5" fill="#ff5252" fill-opacity="0.72"/><rect x="647.77" y="504.5" width="1.1" height="0.3" fill="#ffcdd2" fill-opacity="0.72"/><rect x="649.04" y="504.5" width="1.1" height="0.3" fill="#ffcdd2" fill-opacity="0.72"/><rect x="650.30" y="504.5" width="1.1" height="0.6" fill="#ff5252" fill-opacity="0.72"/><rect x="651.56" y="504.5" width="1.1" height="1.0" fill="#ff5252" fill-opacity="0.72"/><rect x="652.83" y="504.5" width="1.1" height="0.7" fill="#ffcdd2" fill-opacity="0.72"/><rect x="654.09" y="504.5" width="1.1" height="0.8" fill="#ff5252" fill-opacity="0.72"/><rect x="655.35" y="504.5" width="1.1" height="0.9" fill="#ff5252" fill-opacity="0.72"/><rect x="656.62" y="504.5" width="1.1" height="0.7" fill="#ffcdd2" fill-opacity="0.72"/><rect x="657.88" y="504.5" width="1.1" height="0.3" fill="#ffcdd2" fill-opacity="0.72"/><rect x="659.14" y="504.3" width="1.1" height="0.2" fill="#26a69a" fill-opacity="0.72"/><rect x="660.41" y="503.7" width="1.1" height="0.8" fill="#26a69a" fill-opacity="0.72"/><rect x="661.67" y="503.5" width="1.1" height="1.0" fill="#26a69a" fill-opacity="0.72"/><rect x="662.93" y="503.0" width="1.1" height="1.5" fill="#26a69a" fill-opacity="0.72"/><rect x="664.20" y="503.1" width="1.1" height="1.4" fill="#b2dfdb" fill-opacity="0.72"/><rect x="665.46" y="502.9" width="1.1" height="1.6" fill="#26a69a" fill-opacity="0.72"/><rect x="666.72" y="502.6" width="1.1" height="1.9" fill="#26a69a" fill-opacity="0.72"/><rect x="667.99" y="502.6" width="1.1" height="1.9" fill="#26a69a" fill-opacity="0.72"/><rect x="669.25" y="502.6" width="1.1" height="1.9" fill="#b2dfdb" fill-opacity="0.72"/><rect x="670.51" y="502.8" width="1.1" height="1.7" fill="#b2dfdb" fill-opacity="0.72"/><rect x="671.78" y="503.4" width="1.1" height="1.1" fill="#b2dfdb" fill-opacity="0.72"/><rect x="673.04" y="504.0" width="1.1" height="0.5" fill="#b2dfdb" fill-opacity="0.72"/><rect x="674.30" y="504.0" width="1.1" height="0.5" fill="#26a69a" fill-opacity="0.72"/><rect x="675.57" y="504.2" width="1.1" height="0.3" fill="#b2dfdb" fill-opacity="0.72"/><rect x="676.83" y="503.9" width="1.1" height="0.6" fill="#26a69a" fill-opacity="0.72"/><rect x="678.09" y="504.1" width="1.1" height="0.4" fill="#b2dfdb" fill-opacity="0.72"/><rect x="679.36" y="504.0" width="1.1" height="0.5" fill="#26a69a" fill-opacity="0.72"/><rect x="680.62" y="503.7" width="1.1" height="0.8" fill="#26a69a" fill-opacity="0.72"/><rect x="681.88" y="503.5" width="1.1" height="1.0" fill="#26a69a" fill-opacity="0.72"/><rect x="683.15" y="503.1" width="1.1" height="1.4" fill="#26a69a" fill-opacity="0.72"/><rect x="684.41" y="503.2" width="1.1" height="1.3" fill="#b2dfdb" fill-opacity="0.72"/><rect x="685.67" y="502.6" width="1.1" height="1.9" fill="#26a69a" fill-opacity="0.72"/><rect x="686.94" y="502.7" width="1.1" height="1.8" fill="#b2dfdb" fill-opacity="0.72"/><rect x="688.20" y="502.4" width="1.1" height="2.1" fill="#26a69a" fill-opacity="0.72"/><rect x="689.46" y="502.7" width="1.1" height="1.8" fill="#b2dfdb" fill-opacity="0.72"/><rect x="690.73" y="502.3" width="1.1" height="2.2" fill="#26a69a" fill-opacity="0.72"/><rect x="691.99" y="502.2" width="1.1" height="2.3" fill="#26a69a" fill-opacity="0.72"/><rect x="693.25" y="502.3" width="1.1" height="2.2" fill="#b2dfdb" fill-opacity="0.72"/><rect x="694.52" y="502.3" width="1.1" height="2.2" fill="#b2dfdb" fill-opacity="0.72"/><rect x="695.78" y="502.3" width="1.1" height="2.2" fill="#b2dfdb" fill-opacity="0.72"/><rect x="697.04" y="503.0" width="1.1" height="1.5" fill="#b2dfdb" fill-opacity="0.72"/><rect x="698.31" y="503.3" width="1.1" height="1.2" fill="#b2dfdb" fill-opacity="0.72"/><rect x="699.57" y="504.3" width="1.1" height="0.2" fill="#b2dfdb" fill-opacity="0.72"/><rect x="700.83" y="504.5" width="1.1" height="0.7" fill="#ff5252" fill-opacity="0.72"/><rect x="702.10" y="504.5" width="1.1" height="1.6" fill="#ff5252" fill-opacity="0.72"/><rect x="703.36" y="504.5" width="1.1" height="1.7" fill="#ff5252" fill-opacity="0.72"/><rect x="704.62" y="504.5" width="1.1" height="1.8" fill="#ff5252" fill-opacity="0.72"/><rect x="705.89" y="504.5" width="1.1" height="2.0" fill="#ff5252" fill-opacity="0.72"/><rect x="707.15" y="504.5" width="1.1" height="2.1" fill="#ff5252" fill-opacity="0.72"/><rect x="708.41" y="504.5" width="1.1" height="2.3" fill="#ff5252" fill-opacity="0.72"/><rect x="709.68" y="504.5" width="1.1" height="2.6" fill="#ff5252" fill-opacity="0.72"/><rect x="710.94" y="504.5" width="1.1" height="2.4" fill="#ffcdd2" fill-opacity="0.72"/><rect x="712.20" y="504.5" width="1.1" height="2.6" fill="#ff5252" fill-opacity="0.72"/><rect x="713.47" y="504.5" width="1.1" height="2.4" fill="#ffcdd2" fill-opacity="0.72"/><rect x="714.73" y="504.5" width="1.1" height="2.4" fill="#ffcdd2" fill-opacity="0.72"/><rect x="715.99" y="504.5" width="1.1" height="2.3" fill="#ffcdd2" fill-opacity="0.72"/><rect x="717.26" y="504.5" width="1.1" height="2.3" fill="#ff5252" fill-opacity="0.72"/><rect x="718.52" y="504.5" width="1.1" height="1.9" fill="#ffcdd2" fill-opacity="0.72"/><rect x="719.78" y="504.5" width="1.1" height="1.5" fill="#ffcdd2" fill-opacity="0.72"/><rect x="721.05" y="504.5" width="1.1" height="1.6" fill="#ff5252" fill-opacity="0.72"/>
<line x1="727" y1="504.5" x2="912" y2="504.5" stroke="#555" stroke-width="1" stroke-dasharray="3 4"/>
<path d="M7.3 553 H14.9 V562.6 H11.1 V556.7 H7.3 Z" fill="#e6e6e6"/>
<circle cx="18" cy="554.9" r="1.75" fill="#e6e6e6"/>
<path d="M22 553 H26.2 L22.9 562.6 H18.6 Z" fill="#e6e6e6"/>
</svg>
<div class="lg" style="left:11.3px;top:22px;color:#b0b0b0;font-size:7.82px">SHIB / TetherUS · 4h · Binance</div>
<div class="lg" style="left:123px;top:22px;color:#b0b0b0">O<span style="color:#26a69a;font-size:8.2px">0.00000704</span></div>
<div class="lg" style="left:177px;top:22px;color:#b0b0b0">H<span style="color:#26a69a;font-size:8.2px">0.00000710</span></div>
<div class="lg" style="left:229px;top:22px;color:#b0b0b0">L<span style="color:#26a69a;font-size:8.2px">0.00000701</span></div>
<div class="lg" style="left:281px;top:22px;color:#b0b0b0">C<span style="color:#26a69a;font-size:8.2px">0.00000708</span></div>
<div class="lg" style="left:334.5px;top:22px;color:#26a69a;font-size:8.15px">+0.00000003 (+0.43%)</div>
<div class="lg" style="left:11px;top:454.5px;color:#bdbdbd">RSI (14, close)</div>
<div class="lg" style="left:67px;top:454.5px;color:#eed84a;font-size:8.1px;-webkit-text-stroke:0.3px currentColor">46.84</div>
<div class="lg" style="left:11px;top:495px;color:#cfcfcf">MACD (12, 26, close)</div>
<div class="lg" style="left:90.5px;top:494.7px;color:#f7c5cc;font-size:8.2px">−0.00000000</div>
<div class="pl" style="top:34.9px">0.00001350</div><div class="pl" style="top:55.3px">0.00001300</div><div class="pl" style="top:76.6px">0.00001250</div><div class="pl" style="top:98.8px">0.00001200</div><div class="pl" style="top:121.9px">0.00001150</div><div class="pl" style="top:146.0px">0.00001100</div><div class="pl" style="top:171.3px">0.00001050</div><div class="pl" style="top:192.4px">0.00001010</div><div class="pl" style="top:214.3px">0.00000970</div><div class="pl" style="top:237.2px">0.00000930</div><div class="pl" style="top:261.0px">0.00000890</div><div class="pl" style="top:286.0px">0.00000850</div><div class="pl" style="top:305.5px">0.00000820</div><div class="pl" style="top:325.8px">0.00000790</div><div class="pl" style="top:346.8px">0.00000760</div><div class="pl" style="top:368.6px">0.00000730</div><div class="pl" style="top:411.2px">0.00000675</div><div class="pl" style="top:430.8px">0.00000651</div>
<div class="pl" style="top:447px">80.00</div>
<svg width="1024" height="577" viewBox="0 0 1024 577">
<rect x="7" y="448" width="1010" height="2" fill="#666"/>
<rect x="7" y="489" width="1010" height="2" fill="#666"/>
</svg>
<div class="tag" style="left:957px;top:318px;width:53px;height:10px;background:#fff;color:#222;padding-left:4.9px;font-size:8.5px">0.00000801</div>
<div class="tag" style="left:957px;top:350px;width:53px;height:11px;background:#fff;color:#222;padding-left:4.9px;font-size:8.5px">0.00000754</div>
<div class="tag" style="left:957px;top:384.5px;width:53px;height:19px;background:#f23645;color:#fbd9dc;padding-left:5px;font-size:8.5px;line-height:8.5px;padding-top:1px">0.00000708<br>59:58</div>
<div class="tag" style="left:939px;top:456.8px;width:17px;height:10.8px;line-height:11.4px;background:#f5e52a;color:#222;padding-left:2.6px;font-size:8.2px;border-radius:2px">RSI</div>
<div class="tag" style="left:956.7px;top:456.8px;width:29.5px;height:10.8px;line-height:11.2px;background:#f5e52a;color:#222;padding-left:5px;border-radius:2px">46.84</div>
<div class="tag" style="left:913.6px;top:499.2px;width:42.3px;height:10.7px;line-height:11.2px;background:#fcc9d0;color:#222;padding-left:3.2px;font-size:8.05px;border-radius:2px">Histogram</div>
<div class="tag" style="left:956.9px;top:499.2px;width:58.1px;height:10.7px;line-height:11.2px;background:#fcc9d0;color:#222;padding-left:5.2px;border-radius:2px">−0.00000000</div>
<div style="position:absolute;left:957px;top:18px;width:60px;height:20px;background:#111111"></div><div class="tag" style="left:958px;top:19px;width:57.5px;height:17px;border:1px solid #2c2c2c;border-radius:3px;background:#111111;color:#d0d0d0;font-weight:bold;font-size:7.9px;padding:3px 0 0 5.5px">USDT</div>
<div id="times"><div class="tl" style="left:-0.75px">Oct</div><div class="tl" style="left:37.00px">6</div><div class="tl" style="left:75.00px">11</div><div class="tl" style="left:113.30px">16</div><div class="tl" style="left:150.80px">21</div><div class="tl" style="left:188.80px">26</div><div class="tl" style="left:234.25px">Nov</div><div class="tl" style="left:272.00px">6</div><div class="tl" style="left:310.00px">11</div><div class="tl" style="left:348.00px">16</div><div class="tl" style="left:385.50px">21</div><div class="tl" style="left:423.75px">26</div><div class="tl" style="left:461.25px">Dec</div><div class="tl" style="left:499.25px">6</div><div class="tl" style="left:537.50px">11</div><div class="tl" style="left:575.50px">16</div><div class="tl" style="left:613.00px">21</div><div class="tl" style="left:651.25px">26</div><div class="tl b" style="left:696.25px">2026</div><div class="tl" style="left:734.25px">6</div><div class="tl" style="left:772.50px">11</div><div class="tl" style="left:810.50px">16</div><div class="tl" style="left:848.00px">21</div><div class="tl" style="left:886.25px">26</div><div class="tl" style="left:932.00px">Feb</div></div>
<div style="position:absolute;left:31px;top:550px;font-size:12.9px;line-height:16px;font-weight:bold;color:#e6e6e6;-webkit-text-stroke:0">TradingView</div>
</body></html>
